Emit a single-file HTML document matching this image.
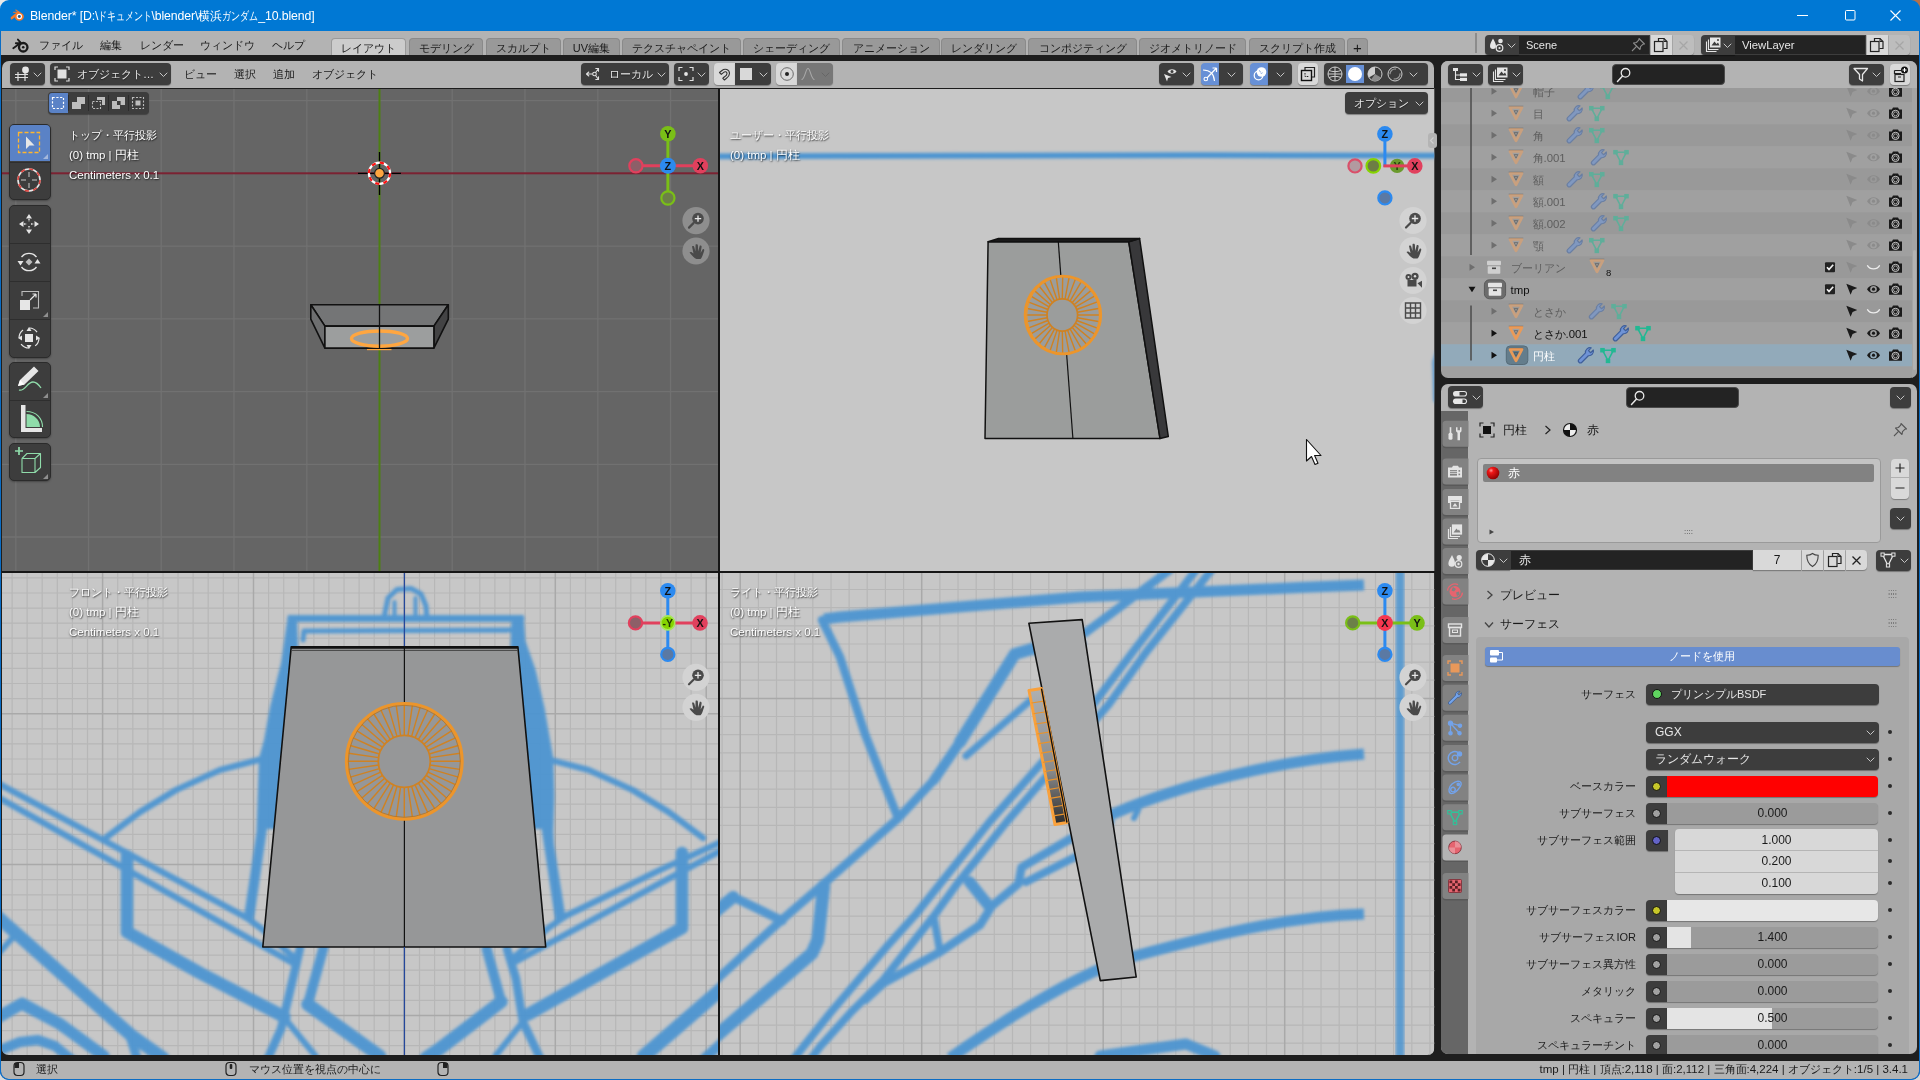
<!DOCTYPE html>
<html lang="ja"><head><meta charset="utf-8"><title>Blender</title>
<style>
*{box-sizing:border-box;margin:0;padding:0}
html,body{width:1920px;height:1080px;overflow:hidden;background:#1e1e1e;font-family:"Liberation Sans",sans-serif;font-size:12px;color:#1a1a1a}
.abs{position:absolute}
#titlebar{position:absolute;left:0;top:0;width:1920px;height:31px;background:#0078d4;color:#fff}
#titlebar .t{position:absolute;left:30px;top:8px;font-size:12.3px;white-space:nowrap;letter-spacing:-0.1px}
#menubar{position:absolute;left:1px;top:31px;width:1918px;height:24px;background:#b3b3b3}
.mi{position:absolute;top:8px;font-size:11px;color:#1a1a1a;white-space:nowrap;line-height:12px}
.tab{position:absolute;top:7px;height:17px;background:#999;border:1px solid #8a8a8a;border-bottom:none;border-radius:4px 4px 0 0;font-size:11px;line-height:19px;text-align:center;color:#1a1a1a;white-space:nowrap;overflow:hidden}
.tab.on{background:#ccc;border-color:#9a9a9a}
.dk{position:absolute;background:#3d3d3d;border-radius:4px;box-shadow:0 1px 1px rgba(0,0,0,.35);color:#e6e6e6;font-size:11.5px;white-space:nowrap}
.lt{position:absolute;background:#d9d9d9;border-radius:4px;box-shadow:0 1px 1px rgba(0,0,0,.3);color:#1a1a1a;font-size:11.5px;white-space:nowrap}
.tx{position:absolute;white-space:nowrap;line-height:12px;font-size:11px}
.la{font-size:11.5px}
.kn{display:inline-block;font-size:12px;transform:scaleX(.75);transform-origin:0 50%;white-space:nowrap;vertical-align:top}
svg{position:absolute;overflow:visible}
.chev{fill:none;stroke:#c6c6c6;stroke-width:1;stroke-linecap:round;stroke-linejoin:round}
#root{position:absolute;left:0;top:0;width:1920px;height:1080px;will-change:transform;transform:translateZ(0)}
</style></head><body><div id="root">
<div id="titlebar">
<svg style="left:10px;top:9px" width="15" height="13" viewBox="0 0 17 15"><path d="M1 9.2 L7.2 4.4 L4 4.4 C3.2 4.4 3.2 3.2 4 3.2 L8.6 3.2 L6.2 1.6 C5.6 1.1 6.3 0.3 6.9 0.7 L14.2 5.6 C17.5 8.2 15.6 13.6 10.6 13.6 C7.6 13.6 5.6 11.6 5.5 9.6 L2 12 C0.9 12.7 0 10 1 9.2Z" fill="#f5792a"/><circle cx="10.6" cy="8.6" r="3.1" fill="#fff"/><circle cx="10.6" cy="8.6" r="1.7" fill="#265787"/></svg>
<div class="t">Blender* [D:\<span class="kn" style="width:53px">ドキュメント</span>\blender\横浜<span class="kn" style="width:36px">ガンダム</span>_10.blend]</div>
<svg style="left:1797px;top:15px" width="12" height="2"><rect width="11" height="1" fill="#fff"/></svg>
<svg style="left:1845px;top:10px" width="11" height="11"><rect x="0.5" y="0.5" width="9.5" height="9.5" rx="1" fill="none" stroke="#fff" stroke-width="1"/></svg>
<svg style="left:1890px;top:10px" width="12" height="12"><path d="M0.5 0.5 L10.5 10.5 M10.5 0.5 L0.5 10.5" stroke="#fff" stroke-width="1.1" fill="none"/></svg>
</div>
<div class="abs" style="left:0;top:31px;width:1px;height:1049px;background:#0a6cc4"></div>
<div class="abs" style="left:1919px;top:31px;width:1px;height:1049px;background:#0a6cc4"></div>
<div class="abs" style="left:0;top:1079px;width:1920px;height:1px;background:#0a6cc4"></div>
<div id="menubar">
<svg style="left:11px;top:6.5px" width="18" height="16" viewBox="0 0 17 15"><path d="M1.2 9.6 L7.6 4.9 L3.6 4.9 M8.4 4.6 L5.6 1.4 " fill="none" stroke="#1a1a1a" stroke-width="1.7" stroke-linecap="round" stroke-linejoin="round"/><circle cx="10.6" cy="8.7" r="4" fill="none" stroke="#1a1a1a" stroke-width="2.2"/><circle cx="10.6" cy="8.7" r="1.2" fill="#1a1a1a"/></svg>
<div class="mi" style="left:38px">ファイル</div>
<div class="mi" style="left:99px">編集</div>
<div class="mi" style="left:139px">レンダー</div>
<div class="mi" style="left:199px">ウィンドウ</div>
<div class="mi" style="left:271px">ヘルプ</div>
<div class="tab on" style="left:330px;width:75px">レイアウト</div>
<div class="tab" style="left:408px;width:74px">モデリング</div>
<div class="tab" style="left:485px;width:75px">スカルプト</div>
<div class="tab" style="left:562px;width:57px">UV編集</div>
<div class="tab" style="left:621px;width:119px">テクスチャペイント</div>
<div class="tab" style="left:742px;width:97px">シェーディング</div>
<div class="tab" style="left:841px;width:98px">アニメーション</div>
<div class="tab" style="left:940px;width:85px">レンダリング</div>
<div class="tab" style="left:1027px;width:109px">コンポジティング</div>
<div class="tab" style="left:1138px;width:107px">ジオメトリノード</div>
<div class="tab" style="left:1248px;width:96px">スクリプト作成</div>
<div class="tab" style="left:1346px;width:21px;font-size:15px;line-height:17px">+</div>
<!-- scene / viewlayer -->
<div class="abs" style="left:1474px;top:2px;width:2px;height:20px;background:#8c8c8c"></div>
<div class="dk" style="left:1484px;top:4px;width:34px;height:20px;border-radius:4px 0 0 4px"></div>
<div class="abs" style="left:1517px;top:4px;width:132px;height:20px;background:#232323;border:1px solid #3d3d3d"></div>
<div class="tx" style="left:1525px;top:8px;color:#e6e6e6;font-size:11px">Scene</div>
<div class="lt" style="left:1650px;top:4px;width:21px;height:20px;border-radius:0"></div>
<div class="lt" style="left:1672px;top:4px;width:21px;height:20px;border-radius:0 4px 4px 0;background:#bdbdbd"></div>
<div class="dk" style="left:1700px;top:4px;width:34px;height:20px;border-radius:4px 0 0 4px"></div>
<div class="abs" style="left:1733px;top:4px;width:132px;height:20px;background:#232323;border:1px solid #3d3d3d"></div>
<div class="tx" style="left:1741px;top:8px;color:#e6e6e6;font-size:11.3px">ViewLayer</div>
<div class="lt" style="left:1866px;top:4px;width:21px;height:20px;border-radius:0"></div>
<div class="lt" style="left:1888px;top:4px;width:21px;height:20px;border-radius:0 4px 4px 0;background:#bdbdbd"></div>
<svg style="left:1488px;top:6px" width="17" height="16" viewBox="0 0 17 16"><path d="M4 1.500C5.500 4.500 7 6.500 7 9A3 3 0 0 1 1 9C1 6.500 2.500 4.500 4 1.500Z" fill="#e6e6e6"/><circle cx="11.500" cy="4" r="2.300" fill="#e6e6e6"/><circle cx="10.500" cy="11" r="3.300" fill="none" stroke="#e6e6e6" stroke-width="1.200"/><circle cx="10.500" cy="11" r="1.100" fill="#e6e6e6"/></svg>
<svg style="left:1506px;top:12px" width="9" height="6" viewBox="0 0 9 6"><path class="chev" d="M1 1L4.500 4.500L8 1"/></svg>
<svg style="left:1629px;top:6px" width="16" height="16" viewBox="0 0 16 16"><path d="M9 1.500L14.500 7L12.800 7.300L10.500 9.600L10 12.500L3.500 6L6.400 5.500L8.700 3.200Z" fill="none" stroke="#8a8a8a" stroke-width="1.100" stroke-linejoin="round"/><path d="M6.800 9.200L2 14" stroke="#8a8a8a" stroke-width="1.100"/></svg>
<svg style="left:1652px;top:6px" width="16" height="16" viewBox="0 0 16 16"><path d="M5.500 4V1.500H11L14 4.500V11.500H10.500" fill="none" stroke="#222" stroke-width="1.200"/><path d="M11 1.500V4.500H14" fill="none" stroke="#222" stroke-width="1"/><rect x="1.500" y="4.500" width="8.500" height="10" fill="none" stroke="#222" stroke-width="1.200"/></svg>
<svg style="left:1677px;top:9px" width="11" height="11"><path d="M1.500 1.500L9.500 9.500M9.500 1.500L1.500 9.500" stroke="#a6a6a6" stroke-width="1.200"/></svg>
<svg style="left:1704px;top:5px" width="17" height="17" viewBox="0 0 17 17"><rect x="5" y="1.500" width="10.500" height="10" fill="#e6e6e6"/><path d="M6.500 9.500L9.500 5.500L11.500 8L13 6.500L14.500 9.500Z" fill="#3d3d3d"/><circle cx="13" cy="4" r="1" fill="#3d3d3d"/><path d="M3.500 3.500V13.500H13.500M1.500 5.500V15.500H11.500" stroke="#e6e6e6" stroke-width="1.100" fill="none"/></svg>
<svg style="left:1722px;top:12px" width="9" height="6" viewBox="0 0 9 6"><path class="chev" d="M1 1L4.500 4.500L8 1"/></svg>
<svg style="left:1868px;top:6px" width="16" height="16" viewBox="0 0 16 16"><path d="M5.500 4V1.500H11L14 4.500V11.500H10.500" fill="none" stroke="#222" stroke-width="1.200"/><path d="M11 1.500V4.500H14" fill="none" stroke="#222" stroke-width="1"/><rect x="1.500" y="4.500" width="8.500" height="10" fill="none" stroke="#222" stroke-width="1.200"/></svg>
<svg style="left:1893px;top:9px" width="11" height="11"><path d="M1.500 1.500L9.500 9.500M9.500 1.500L1.500 9.500" stroke="#a6a6a6" stroke-width="1.200"/></svg>
</div>
<!-- status bar -->
<div class="abs" id="status" style="left:1px;top:1061px;width:1918px;height:18px;background:#b3b3b3;border-radius:0 0 7px 7px">
<svg style="left:12px;top:0px" width="12" height="16" viewBox="0 0 12 16"><rect x="1" y="1.500" width="10" height="13" rx="3.500" fill="none" stroke="#222" stroke-width="1.200"/><path d="M1.500 2H6V7H1.500Z" fill="#222"/></svg>
<svg style="left:224px;top:0px" width="12" height="16" viewBox="0 0 12 16"><rect x="1" y="1.500" width="10" height="13" rx="3.500" fill="none" stroke="#222" stroke-width="1.200"/><rect x="4.700" y="3" width="2.600" height="5" rx="1" fill="#222"/></svg>
<svg style="left:436px;top:0px" width="12" height="16" viewBox="0 0 12 16"><rect x="1" y="1.500" width="10" height="13" rx="3.500" fill="none" stroke="#222" stroke-width="1.200"/><path d="M6 2H10.500V7H6Z" fill="#222"/></svg>
<div class="tx" style="left:35px;top:2px">選択</div>
<div class="tx" style="left:248px;top:2px">マウス位置を視点の中心に</div>
<div class="tx" style="right:11px;top:2px"><span class="la">tmp | </span>円柱<span class="la"> | </span>頂点<span class="la">:2,118 | </span>面<span class="la">:2,112 | </span>三角面<span class="la">:4,224 | </span>オブジェクト<span class="la">:1/5 | 3.4.1</span></div>
</div>
<div class="abs" id="vp" style="left:2px;top:61px;width:1432.3px;height:60px;background:#b3b3b3;border-radius:7px 7px 0 0"></div>
<svg id="vpsvg" style="left:0;top:0" width="1920" height="1080" viewBox="0 0 1920 1080">
<defs>
<clipPath id="cTL"><rect x="2" y="88" width="716" height="483"/></clipPath>
<clipPath id="cTR"><rect x="720" y="88" width="714.300" height="483"/></clipPath>
<clipPath id="cBL"><path d="M2 573H718V1055H9Q2 1055 2 1048Z"/></clipPath>
<clipPath id="cBR"><path d="M720 573H1434.300V1048Q1434.300 1055 1427.300 1055H720Z"/></clipPath>
<filter id="bl" x="-5%" y="-5%" width="110%" height="110%"><feGaussianBlur stdDeviation="1.7"/></filter>
<filter id="bl2" x="-5%" y="-5%" width="110%" height="110%"><feGaussianBlur stdDeviation="1.6"/></filter>
<linearGradient id="wg" x1="0" y1="0" x2="0" y2="1"><stop offset="0" stop-color="#aeb0b1"/><stop offset="0.6" stop-color="#8a8b8c"/><stop offset="1" stop-color="#2c2c2c"/></linearGradient>
</defs>
<rect x="2" y="88" width="716" height="483" fill="#656565"/>
<rect x="720" y="88" width="714.300" height="483" fill="#c7c7c7"/>
<rect x="2" y="573" width="716" height="482" fill="#c7c7c7" clip-path="url(#cBL)"/>
<rect x="720" y="573" width="714.300" height="482" fill="#c7c7c7" clip-path="url(#cBR)"/>
<g clip-path="url(#cTL)"><path d="M-57.0 88V571M15.8 88V571M88.5 88V571M161.2 88V571M234.0 88V571M306.8 88V571M379.5 88V571M452.2 88V571M525.0 88V571M597.8 88V571M670.5 88V571M743.2 88V571M2 27.8H718M2 100.6H718M2 173.3H718M2 246.1H718M2 318.8H718M2 391.6H718M2 464.3H718M2 537.0H718M2 609.8H718" stroke="#717171" stroke-width="1.3" fill="none"/></g>
<g clip-path="url(#cTL)"><rect x="2" y="172.3" width="716" height="2" fill="#7b2232"/><rect x="378.5" y="88" width="2" height="483" fill="#4d7f12"/></g>
<g clip-path="url(#cBL)"><path d="M-3.0 573V1055M12.1 573V1055M27.1 573V1055M42.2 573V1055M57.3 573V1055M72.4 573V1055M87.5 573V1055M117.7 573V1055M132.8 573V1055M147.9 573V1055M163.0 573V1055M178.0 573V1055M193.1 573V1055M208.2 573V1055M223.3 573V1055M238.4 573V1055M268.6 573V1055M283.7 573V1055M298.8 573V1055M313.9 573V1055M328.9 573V1055M344.0 573V1055M359.1 573V1055M374.2 573V1055M389.3 573V1055M419.5 573V1055M434.6 573V1055M449.7 573V1055M464.8 573V1055M479.8 573V1055M494.9 573V1055M510.0 573V1055M525.1 573V1055M540.2 573V1055M570.4 573V1055M585.5 573V1055M600.6 573V1055M615.7 573V1055M630.8 573V1055M645.8 573V1055M660.9 573V1055M676.0 573V1055M691.1 573V1055M721.3 573V1055M2 577.9H718M2 593.0H718M2 608.1H718M2 623.2H718M2 638.2H718M2 653.3H718M2 668.4H718M2 683.5H718M2 698.6H718M2 728.8H718M2 743.9H718M2 759.0H718M2 774.1H718M2 789.2H718M2 804.2H718M2 819.3H718M2 834.4H718M2 849.5H718M2 879.7H718M2 894.8H718M2 909.9H718M2 925.0H718M2 940.1H718M2 955.1H718M2 970.2H718M2 985.3H718M2 1000.4H718M2 1030.6H718M2 1045.7H718M2 1060.8H718" stroke="#b7b7b7" stroke-width="1.2" fill="none"/><path d="M102.6 573V1055M253.5 573V1055M404.4 573V1055M555.3 573V1055M706.2 573V1055M2 562.8H718M2 713.7H718M2 864.6H718M2 1015.5H718" stroke="#a9a9a9" stroke-width="1.5" fill="none"/></g>
<g clip-path="url(#cBR)"><path d="M703.9 573V1055M722.1 573V1055M758.4 573V1055M776.5 573V1055M794.7 573V1055M812.8 573V1055M831.0 573V1055M849.1 573V1055M867.2 573V1055M885.4 573V1055M903.6 573V1055M939.9 573V1055M958.0 573V1055M976.2 573V1055M994.3 573V1055M1012.5 573V1055M1030.6 573V1055M1048.8 573V1055M1066.9 573V1055M1085.0 573V1055M1121.3 573V1055M1139.5 573V1055M1157.7 573V1055M1175.8 573V1055M1194.0 573V1055M1212.1 573V1055M1230.2 573V1055M1248.4 573V1055M1266.5 573V1055M1302.8 573V1055M1321.0 573V1055M1339.2 573V1055M1357.3 573V1055M1375.5 573V1055M1393.6 573V1055M1411.8 573V1055M1429.9 573V1055M1448.0 573V1055M720 571.4H1435M720 589.5H1435M720 607.6H1435M720 625.8H1435M720 644.0H1435M720 662.1H1435M720 680.2H1435M720 716.5H1435M720 734.7H1435M720 752.9H1435M720 771.0H1435M720 789.1H1435M720 807.3H1435M720 825.4H1435M720 843.6H1435M720 861.8H1435M720 898.0H1435M720 916.2H1435M720 934.4H1435M720 952.5H1435M720 970.6H1435M720 988.8H1435M720 1006.9H1435M720 1025.1H1435M720 1043.2H1435" stroke="#b7b7b7" stroke-width="1.2" fill="none"/><path d="M740.2 573V1055M921.7 573V1055M1103.2 573V1055M1284.7 573V1055M720 698.4H1435M720 879.9H1435M720 1061.4H1435" stroke="#a9a9a9" stroke-width="1.5" fill="none"/></g>
<g clip-path="url(#cTR)" filter="url(#bl)" fill="none" stroke="#4b94d1" stroke-linecap="round" stroke-linejoin="round">
<path d="M715.0 156.3 L1000.0 155.6 L1200.0 155.2 L1440.0 155.6" stroke-width="5.8" />
<path d="M1437.0 352.0 L1434.0 362.0 L1435.0 400.0 L1438.0 404.0" stroke-width="3" />
</g>
<g clip-path="url(#cBL)" filter="url(#bl)" fill="none" stroke="#4b94d1" stroke-linecap="round" stroke-linejoin="round" opacity="0.93">
<path d="M288 615L297 615L300 700L285 800L282 829L267 829L253.500 922L243.500 920L256.500 832L259 758L264 740L270 707L281 663Z" fill="#4b94d1" stroke="none"/>
<path d="M523.500 615L511.600 615L508.600 700L523.600 800L526.600 829L541.600 829L555.500 922L566 920L554 844L553.300 832L554.400 796L553.300 758L544.400 707L535.500 669.500L525.500 641Z" fill="#4b94d1" stroke="none"/>
<path d="M291.0 618.5 L521.0 618.5" stroke-width="7" />
<path d="M303.0 640.0 L304.0 631.0 L513.0 630.0 L514.0 640.0" stroke-width="5" />
<path d="M384.4 616.0 L388.0 598.0 L397.0 589.5 L411.0 588.5 L421.0 594.0 L426.0 606.0 L426.7 616.0" stroke-width="5" />
<path d="M394.5 616.0 L394.5 602.0" stroke-width="4" />
<path d="M415.5 616.0 L415.5 598.0" stroke-width="4" />
<path d="M264.0 758.5 L220.0 770.0 L176.0 790.0 L140.0 812.0 L105.5 838.0" stroke-width="6.3" />
<path d="M544.6 758.5 L588.6 770.0 L632.6 790.0 L668.6 812.0 L703.1 838.0" stroke-width="6.3" />
<path d="M-3.0 796.8 L293.3 963.3" stroke-width="6.3" />
<path d="M-3.0 782.8 L246.7 917.8 L262.0 929.0 L294.4 957.8" stroke-width="6.3" />
<path d="M723.0 849.5 L660.0 883.3 L514.4 962.2" stroke-width="6.3" />
<path d="M723.0 841.0 L660.0 870.0 L564.4 916.7 L547.0 929.0 L514.5 957.0" stroke-width="6.3" />
<path d="M294.4 957.8 L294.0 963.0" stroke-width="5" />
<path d="M514.5 957.0 L514.4 962.0" stroke-width="5" />
<path d="M127.0 856.0 L127.0 932.0 L200.0 973.0 L284.4 1016.9" stroke-width="12.5" />
<path d="M284.4 1018.0 L315.6 1056.0" stroke-width="6" />
<path d="M682.0 853.0 L682.0 928.0 L527.5 1014.8" stroke-width="12.5" />
<path d="M527.5 1016.0 L495.4 1056.0" stroke-width="6" />
<path d="M300.0 948.0 L292.0 982.5 L281.0 1029.0 L268.0 1058.0" stroke-width="8.5" />
<path d="M323.4 948.0 L307.8 1004.4" stroke-width="10" />
<path d="M307.8 1004.4 L379.7 1056.0" stroke-width="13" />
<path d="M507.0 949.0 L515.8 978.0 L523.0 1022.0 L540.0 1058.0" stroke-width="8.5" />
<path d="M486.7 949.0 L501.2 1001.7" stroke-width="10" />
<path d="M501.2 1001.7 L438.0 1050.0 L426.0 1058.0" stroke-width="13" />
<path d="M-5.0 914.5 L130.4 1034.7 L163.0 1058.0" stroke-width="13" />
<path d="M128.0 1030.0 L137.0 1058.0" stroke-width="9" />
<path d="M-3.0 955.0 L13.3 937.0" stroke-width="6" />
<path d="M-5.0 1019.0 L22.0 1003.6 L60.0 1024.0 L103.7 1056.0" stroke-width="12" />
<path d="M-5.0 1052.0 L20.0 1042.0 L38.0 1040.0 L55.0 1046.0 L72.0 1060.0" stroke-width="10" />
<path d="M725.0 986.0 L644.0 1056.0" stroke-width="14" />
<path d="M725.0 1040.0 L705.0 1058.0" stroke-width="10" />
</g>
<g clip-path="url(#cBR)" filter="url(#bl)" fill="none" stroke="#4b94d1" stroke-linecap="round" stroke-linejoin="round" opacity="0.93">
<path d="M824 619L840 617L1080 597L1300 587.5L1364 585" stroke-width="11" stroke-linecap="butt"/>
<path d="M1364 754 C1280 760 1180 785 1113 814 C1090 824 1085 828 1075 834" stroke-width="11" stroke-linecap="butt"/>
<path d="M1364 914 C1300 916 1235 929 1135 956 C1100 966 1040 995 950 1058" stroke-width="11" stroke-linecap="butt"/>
<path d="M822.0 620.0 L840.0 657.0 L865.0 734.0 L883.0 780.0 L898.0 818.0" stroke-width="8.5" />
<path d="M960.0 742.0 L934.0 780.0 L898.0 818.5 L823.7 883.7 L782.2 919.5 L715.0 981.0" stroke-width="8.5" />
<path d="M934.0 780.0 L960.0 742.0" stroke-width="10" />
<path d="M960.0 742.0 L1014.8 654.0 L1032.0 649.0 L1080.0 644.0" stroke-width="12" />
<path d="M966.0 756.0 L1031.0 700.0" stroke-width="7" />
<path d="M823.7 886.0 L817.8 940.0 L811.9 953.3 L715.0 1037.0" stroke-width="13" />
<path d="M715.0 912.0 L733.3 897.0" stroke-width="12" />
<path d="M733.3 897.0 L782.2 920.7" stroke-width="9" />
<path d="M1196.0 570.0 L1132.8 651.8 L1093.9 703.6 L989.6 821.9 L940.0 884.0 L916.7 913.3 L886.7 946.7 L858.3 980.0 L830.0 1013.3 L803.3 1046.7 L793.0 1060.0" stroke-width="7.8" />
<path d="M1211.5 570.0 L1146.4 651.8 L1109.4 703.6 L1006.7 821.9 L957.0 884.0 L933.3 916.7 L906.7 950.0 L883.3 980.0 L850.0 1013.3 L820.0 1046.7 L810.0 1060.0" stroke-width="7.8" />
<path d="M1169.6 570.0 L1085.0 633.0" stroke-width="8.5" />
<path d="M969.6 882.0 L988.9 906.0" stroke-width="11.5" />
<path d="M934.0 918.3 L940.0 952.0" stroke-width="7.5" />
<path d="M1110.0 822.0 L1070.0 839.0 L1021.5 867.4 L1018.5 883.7 L991.9 906.0 L980.0 925.0 L940.0 952.0 L883.3 983.3 L865.0 1000.0" stroke-width="8.5" />
<path d="M1112.0 845.0 L1075.0 857.0 L1026.0 882.0" stroke-width="8" />
<path d="M1118.0 812.0 L1128.0 806.0 L1138.0 810.0 L1134.0 818.0" stroke-width="6" />
<path d="M1100.0 1056.0 L1186.0 1044.0 L1215.0 1056.0" stroke-width="11" />
</g>
<g clip-path="url(#cBR)" opacity="0.85"><rect x="1395.600" y="560" width="8.800" height="510" fill="#4b94d1" filter="url(#bl2)"/></g>
<g clip-path="url(#cTL)" stroke="#111" stroke-width="1.6" stroke-linejoin="round">
<path d="M310.8 304.8H448.3L433.9 326.1H324.9Z" fill="#747576"/>
<path d="M310.8 304.8L324.9 326.1V348.1L310.8 319.1Z" fill="#6e6f70"/>
<path d="M448.3 304.8L433.9 326.1V348.1L448.3 319.1Z" fill="#434344"/>
<path d="M324.9 326.1H433.9V348.1H324.9Z" fill="#9c9e9e"/>
<ellipse cx="379.5" cy="338.6" rx="28" ry="7.6" fill="none" stroke="#ffa640" stroke-width="3.4"/>
<path d="M367 349.6H391.5" stroke="#ffa640" stroke-width="1.2"/>
<path d="M379.5 304.8V348.1" fill="none" stroke-width="1.3"/>
</g>
<g clip-path="url(#cTL)"><path d="M358 173.3H401M379.5 152V195" stroke="#000" stroke-width="1.3"/>
<circle cx="379.5" cy="173.3" r="10.6" fill="none" stroke="#fff" stroke-width="2.2"/><circle cx="379.5" cy="173.3" r="10.6" fill="none" stroke="#f11" stroke-width="2.2" stroke-dasharray="4.16 4.16"/>
<circle cx="379.5" cy="173.3" r="4.9" fill="#ffa640" stroke="#1d2023" stroke-width="1.2"/></g>
<g clip-path="url(#cTR)" stroke="#111" stroke-width="1.5" stroke-linejoin="round">
<path d="M988.1 241.7L1128.75 241.7L1160 438.5L985 438.5Z" fill="#9b9d9c"/>
<path d="M1128.75 241.7L1139.6 238.5L1168.3 436.5L1160 438.5Z" fill="#38383a"/>
<path d="M988.1 241.7L998.5 238.5L1139.6 238.5L1128.75 241.7Z" fill="#1a1a1a"/>
<path d="M1058.3 241.7L1072.9 438.5" fill="none" stroke-width="1.2"/>
</g><g clip-path="url(#cTR)">
<ellipse cx="1062.7" cy="315" rx="37.8" ry="39" fill="#9b9d9c"/>
<path d="M1062.3 298.9L1062.7 276.2M1065.0 299.1L1069.2 276.8M1067.5 299.9L1075.6 278.5M1070.0 301.1L1081.5 281.4M1072.1 302.7L1086.9 285.3M1074.0 304.7L1091.5 290.1M1075.6 306.9L1095.3 295.6M1076.7 309.5L1098.0 301.7M1077.4 312.2L1099.7 308.3M1077.6 315.0L1100.3 315.0M1077.4 317.8L1099.7 321.7M1076.7 320.5L1098.0 328.3M1075.6 323.1L1095.3 334.4M1074.0 325.3L1091.5 339.9M1072.1 327.3L1086.9 344.7M1070.0 328.9L1081.5 348.6M1067.5 330.1L1075.6 351.5M1065.0 330.9L1069.2 353.2M1062.3 331.1L1062.7 353.8M1059.6 330.9L1056.2 353.2M1057.1 330.1L1049.8 351.5M1054.6 328.9L1043.9 348.6M1052.5 327.3L1038.5 344.7M1050.6 325.3L1033.9 339.9M1049.0 323.1L1030.1 334.4M1047.9 320.5L1027.4 328.3M1047.2 317.8L1025.7 321.7M1047.0 315.0L1025.1 315.0M1047.2 312.2L1025.7 308.3M1047.9 309.5L1027.4 301.7M1049.0 306.9L1030.1 295.6M1050.6 304.7L1033.9 290.1M1052.5 302.7L1038.5 285.3M1054.6 301.1L1043.9 281.4M1057.1 299.9L1049.8 278.5M1059.6 299.1L1056.2 276.8" stroke="#cf8223" stroke-width="1.4" fill="none"/><ellipse cx="1062.3" cy="315.0" rx="15.3" ry="16.1" fill="none" stroke="#cf8223" stroke-width="1.7"/>
<ellipse cx="1062.7" cy="315" rx="37.6" ry="38.8" fill="none" stroke="#ec952b" stroke-width="2.8"/>
<ellipse cx="1064.2" cy="315" rx="37.4" ry="38.6" fill="none" stroke="#ee972c" stroke-width="1"/>
</g>
<g clip-path="url(#cBL)" stroke="#111" stroke-width="1.6" stroke-linejoin="round">
<path d="M291.2 646.8H517.9L545.7 947H262.8Z" fill="#969798"/>
<path d="M291 650.4H518" stroke="#444" stroke-width="1" fill="none"/>
<path d="M291.2 647.6H517.9" stroke="#111" stroke-width="2.2" fill="none"/>
<path d="M404.4 573V646" stroke="#24479a" stroke-width="1.3"/><path d="M404.4 947V1055" stroke="#24479a" stroke-width="1.3"/>
<path d="M404.4 646.8V947" fill="none" stroke-width="1.2"/>
</g><g clip-path="url(#cBL)">
<circle cx="404.3" cy="761.3" r="58" fill="#969798"/>
<path d="M404.3 735.3L404.3 703.3M408.0 735.6L412.6 703.9M411.6 736.4L420.6 705.6M415.1 737.6L428.4 708.5M418.4 739.4L435.7 712.5M421.3 741.7L442.3 717.5M423.9 744.3L448.1 723.3M426.2 747.2L453.1 729.9M428.0 750.5L457.1 737.2M429.2 754.0L460.0 745.0M430.0 757.6L461.7 753.0M430.3 761.3L462.3 761.3M430.0 765.0L461.7 769.6M429.2 768.6L460.0 777.6M428.0 772.1L457.1 785.4M426.2 775.4L453.1 792.7M423.9 778.3L448.1 799.3M421.3 780.9L442.3 805.1M418.4 783.2L435.7 810.1M415.1 785.0L428.4 814.1M411.6 786.2L420.6 817.0M408.0 787.0L412.6 818.7M404.3 787.3L404.3 819.3M400.6 787.0L396.0 818.7M397.0 786.2L388.0 817.0M393.5 785.0L380.2 814.1M390.2 783.2L372.9 810.1M387.3 780.9L366.3 805.1M384.7 778.3L360.5 799.3M382.4 775.4L355.5 792.7M380.6 772.1L351.5 785.4M379.4 768.6L348.6 777.6M378.6 765.0L346.9 769.6M378.3 761.3L346.3 761.3M378.6 757.6L346.9 753.0M379.4 754.0L348.6 745.0M380.6 750.5L351.5 737.2M382.4 747.2L355.5 729.9M384.7 744.3L360.5 723.3M387.3 741.7L366.3 717.5M390.2 739.4L372.9 712.5M393.5 737.6L380.2 708.5M397.0 736.4L388.0 705.6M400.6 735.6L396.0 703.9" stroke="#cf8223" stroke-width="1.45" fill="none"/><ellipse cx="404.3" cy="761.3" rx="26.0" ry="26.0" fill="none" stroke="#cf8223" stroke-width="1.75"/>
<circle cx="404.3" cy="761.3" r="57.8" fill="none" stroke="#ec952b" stroke-width="3.2"/><circle cx="404.3" cy="761.3" r="56" fill="none" stroke="#b87420" stroke-width=".8"/>
</g>
<g clip-path="url(#cBR)" stroke-linejoin="round">
<path d="M1028.9 623.3L1082.2 619.6L1136.2 977L1100.3 980.6Z" fill="#aaabac" stroke="#111" stroke-width="1.6"/>
<path d="M1029 690.5L1041.5 688.6L1067 822.5L1055 824.6Z" fill="url(#wg)" stroke="#f9a13c" stroke-width="3"/>
<path d="M1031.4 703.0L1043.9 701.1M1033.5 713.8L1045.9 711.8M1035.5 724.0L1047.9 722.1M1037.4 733.9L1049.8 732.0M1039.3 743.6L1051.6 741.6M1041.1 753.1L1053.4 751.1M1042.9 762.4L1055.2 760.4M1044.7 771.5L1056.9 769.5M1046.5 780.6L1058.6 778.6M1048.2 789.6L1060.3 787.5M1049.9 798.4L1062.0 796.4M1051.6 807.2L1063.7 805.2M1053.3 815.9L1065.4 813.9" stroke="#e8932c" stroke-width="1.1" fill="none"/>
<path d="M1041.5 688.6L1067 822.5" stroke="#111" stroke-width="1.4"/>
</g>
<rect x="718" y="88" width="2" height="967" fill="#161616"/><rect x="2" y="571" width="1432.300" height="2" fill="#161616"/><rect x="2" y="88" width="1432.300" height="1" fill="#1c1c1c"/>
</svg>
<div class="abs" id="vph" style="left:0;top:0;width:1920px;height:0">
<div class="dk" style="left:10px;top:63px;width:35px;height:22px"></div>
<svg style="left:14px;top:66px" width="18" height="16" viewBox="0 0 18 16"><path d="M1 8.5H14M1 11.5H14M4 6V15M11 6V15" stroke="#e0e0e0" stroke-width="1.2" fill="none"/><circle cx="11.5" cy="4" r="3.4" fill="#e6e6e6"/></svg>
<svg style="left:33px;top:72px" width="9" height="6" viewBox="0 0 9 6"><path class="chev" d="M1 1L4.5 4.5L8 1"/></svg>
<div class="dk" style="left:50px;top:63px;width:121px;height:22px"></div>
<svg style="left:54px;top:66px" width="16" height="16" viewBox="0 0 16 16"><path d="M1 4V1H4M12 1H15V4M15 12V15H12M4 15H1V12" stroke="#e0e0e0" stroke-width="1.2" fill="none"/><rect x="3.5" y="3.5" width="9" height="9" fill="#e0e0e0"/></svg>
<div class="tx" style="left:77px;top:68px;color:#e6e6e6;text-shadow:0 1px 1px rgba(0,0,0,.5)">オブジェクト…</div>
<svg style="left:159px;top:72px" width="9" height="6" viewBox="0 0 9 6"><path class="chev" d="M1 1L4.5 4.5L8 1"/></svg>
<div class="tx" style="left:184px;top:68px">ビュー</div>
<div class="tx" style="left:234px;top:68px">選択</div>
<div class="tx" style="left:273px;top:68px">追加</div>
<div class="tx" style="left:312px;top:68px">オブジェクト</div>
<div class="dk" style="left:581px;top:63px;width:88px;height:22px"></div>
<svg style="left:585px;top:66px" width="17" height="16" viewBox="0 0 17 16"><path d="M9.5 8L1.5 8M1.5 8L3.8 6M1.5 8L3.8 10M9.5 8L13.5 2.5M13.5 2.5H10.8M13.5 2.5V5.2M9.5 8L13.5 13.5M13.5 13.5H10.8M13.5 13.5V10.8" stroke="#e0e0e0" stroke-width="1.1" fill="none" stroke-linecap="round"/><circle cx="9.5" cy="8" r="1.8" fill="#3d3d3d" stroke="#e0e0e0" stroke-width="1.1"/></svg>
<div class="tx" style="left:609px;top:68px;color:#e6e6e6;text-shadow:0 1px 1px rgba(0,0,0,.5)">ローカル</div>
<svg style="left:657px;top:72px" width="9" height="6" viewBox="0 0 9 6"><path class="chev" d="M1 1L4.5 4.5L8 1"/></svg>
<div class="dk" style="left:674px;top:63px;width:35px;height:22px"></div>
<svg style="left:678px;top:66px" width="16" height="16" viewBox="0 0 16 16"><path d="M1 5V1.5H4.5M11.5 1.5H15V5M15 11V14.5H11.5M4.5 14.5H1V11" stroke="#e0e0e0" stroke-width="1.2" fill="none"/><circle cx="8" cy="8" r="1.9" fill="#e6e6e6"/></svg>
<svg style="left:697px;top:72px" width="9" height="6" viewBox="0 0 9 6"><path class="chev" d="M1 1L4.5 4.5L8 1"/></svg>
<div class="lt" style="left:714px;top:63px;width:21px;height:22px;border-radius:4px 0 0 4px"></div>
<svg style="left:717px;top:66px" width="16" height="16" viewBox="0 0 16 16"><path d="M2.5 6.5L5 4.5C8 2 12.5 3.5 12.5 7.5C12.5 11 9.5 12 7.5 14L5.8 12.3C7.5 10.5 10 10 10 7.5C10 5.8 8 5.2 6.7 6.3L4.3 8.3Z" fill="none" stroke="#333" stroke-width="1.1" stroke-linejoin="round"/></svg>
<div class="dk" style="left:735px;top:63px;width:36px;height:22px;border-radius:0 4px 4px 0"></div>
<div class="abs" style="left:740px;top:68px;width:12px;height:12px;background:#d9d9d9"></div>
<svg style="left:759px;top:72px" width="9" height="6" viewBox="0 0 9 6"><path class="chev" d="M1 1L4.5 4.5L8 1"/></svg>
<div class="lt" style="left:776px;top:63px;width:21px;height:22px;border-radius:4px 0 0 4px"></div>
<svg style="left:779px;top:66px" width="16" height="16" viewBox="0 0 16 16"><circle cx="8" cy="8" r="6.3" fill="none" stroke="#6a6a6a" stroke-width="1"/><circle cx="8" cy="8" r="2" fill="#222"/></svg>
<div class="abs" style="left:797px;top:63px;width:36px;height:22px;border-radius:0 4px 4px 0;background:#777;box-shadow:0 1px 1px rgba(0,0,0,.25)"></div>
<svg style="left:800px;top:66px" width="16" height="16" viewBox="0 0 16 16"><path d="M1.5 13.5C5 13.5 5.5 2.5 8 2.5C10.5 2.5 11 13.5 14.5 13.5" fill="none" stroke="#a8a8a8" stroke-width="1.1"/></svg>
<svg style="left:821px;top:72px" width="9" height="6" viewBox="0 0 9 6"><path class="chev" style="stroke:#666" d="M1 1L4.5 4.5L8 1"/></svg>
<div class="dk" style="left:1159px;top:63px;width:35px;height:22px"></div>
<svg style="left:1162px;top:65px" width="18" height="18" viewBox="0 0 18 18"><path d="M5.5 6.5C7.5 3.6 12.5 3.6 14.5 6.5C12.5 9.4 7.5 9.4 5.5 6.5Z" fill="#e6e6e6"/><circle cx="10" cy="6.5" r="1.5" fill="#3d3d3d"/><path d="M2 9L9.5 12L6 13L5 16.5Z" fill="#e6e6e6"/></svg>
<svg style="left:1182px;top:72px" width="9" height="6" viewBox="0 0 9 6"><path class="chev" d="M1 1L4.5 4.5L8 1"/></svg>
<div class="abs" style="left:1201px;top:63px;width:19px;height:22px;border-radius:4px 0 0 4px;background:#6790d6;box-shadow:0 1px 1px rgba(0,0,0,.3)"></div>
<svg style="left:1202px;top:66px" width="17" height="16" viewBox="0 0 17 16"><path d="M1 4C8 4 12 8 12.5 15" fill="none" stroke="#fff" stroke-width="1.2"/><path d="M4.5 12.5L14.5 2M14.5 2H10.5M14.5 2V6" fill="none" stroke="#fff" stroke-width="1.2"/><circle cx="3.8" cy="13" r="1.8" fill="#6790d6" stroke="#fff" stroke-width="1.1"/></svg>
<div class="dk" style="left:1219px;top:63px;width:24px;height:22px;border-radius:0 4px 4px 0"></div>
<svg style="left:1227px;top:72px" width="9" height="6" viewBox="0 0 9 6"><path class="chev" d="M1 1L4.5 4.5L8 1"/></svg>
<div class="abs" style="left:1250px;top:63px;width:19px;height:22px;border-radius:4px 0 0 4px;background:#6790d6;box-shadow:0 1px 1px rgba(0,0,0,.3)"></div>
<svg style="left:1251px;top:65px" width="18" height="18" viewBox="0 0 18 18"><circle cx="10.5" cy="7" r="4.8" fill="#fff"/><circle cx="7.5" cy="10.5" r="4.3" fill="none" stroke="#fff" stroke-width="1.2"/><path d="M8.5 5.5L10.2 8.5L12 7.5" fill="none" stroke="#6790d6" stroke-width="1" stroke-dasharray="1.5 1"/></svg>
<div class="dk" style="left:1268px;top:63px;width:24px;height:22px;border-radius:0 4px 4px 0"></div>
<svg style="left:1276px;top:72px" width="9" height="6" viewBox="0 0 9 6"><path class="chev" d="M1 1L4.5 4.5L8 1"/></svg>
<div class="lt" style="left:1298px;top:63px;width:20px;height:22px"></div>
<svg style="left:1300px;top:66px" width="16" height="16" viewBox="0 0 16 16"><path d="M5 4V1.5H14.5V11H12" fill="none" stroke="#222" stroke-width="1.2"/><rect x="1.5" y="4.5" width="10" height="10" fill="none" stroke="#111" stroke-width="1.4"/><path d="M5 7V10.5H8.5" fill="none" stroke="#222" stroke-width="1" stroke-dasharray="1.6 1"/></svg>
<div class="dk" style="left:1324px;top:63px;width:104px;height:22px"></div>
<div class="abs" style="left:1346px;top:65px;width:18px;height:18px;background:#6790d6"></div>
<svg style="left:1324px;top:63px" width="104" height="22" viewBox="0 0 104 22"><g fill="none" stroke="#cfcfcf" stroke-width="1"><circle cx="11" cy="11" r="7"/><path d="M4 11H18M11 4V18M5 7.5C8.5 9 13.5 9 17 7.5M5 14.5C8.5 13 13.5 13 17 14.5"/></g><circle cx="31" cy="11" r="7" fill="#fff"/><circle cx="51" cy="11" r="7" fill="none" stroke="#cfcfcf" stroke-width="1"/><path d="M51 4A7 7 0 0 0 44.9 14.5L51 11Z" fill="#cfcfcf"/><path d="M51 11L57 14.6A7 7 0 0 1 47 16.8Z" fill="#8a8a8a"/><circle cx="71" cy="11" r="7" fill="none" stroke="#cfcfcf" stroke-width="1"/><circle cx="71" cy="11" r="5" fill="none" stroke="#999" stroke-width="1.2" stroke-dasharray="9 6"/><path d="M65.5 5H22M42.5 3V19M62.5 3V19M82 3V19" stroke="#333" stroke-width="0"/></svg>
<svg style="left:1409px;top:72px" width="9" height="6" viewBox="0 0 9 6"><path class="chev" d="M1 1L4.5 4.5L8 1"/></svg>
<div class="dk" style="left:1345px;top:92px;width:83px;height:22px"></div>
<div class="tx" style="left:1354px;top:97px;color:#e6e6e6;text-shadow:0 1px 1px rgba(0,0,0,.5)">オプション</div>
<svg style="left:1415px;top:101px" width="9" height="6" viewBox="0 0 9 6"><path class="chev" d="M1 1L4.5 4.5L8 1"/></svg>
<div class="dk" style="left:48px;top:92px;width:101px;height:22px;background:#3d3d3d"></div>
<div class="abs" style="left:49px;top:93px;width:19px;height:20px;background:#5a82c6;border-radius:3px 0 0 3px"></div>
<svg style="left:48px;top:92px" width="101" height="22" viewBox="0 0 101 22"><rect x="4.5" y="5.5" width="11" height="11" fill="none" stroke="#fff" stroke-width="1.2" stroke-dasharray="2.2 1.6"/><path d="M20.5 3V19M40.5 3V19M60.5 3V19M80.5 3V19" stroke="#2c2c2c" stroke-width="1"/><path d="M29 5H37V12H33V17H24V10H29Z" fill="#bdbdbd"/><rect x="44.500" y="9.5" width="8" height="7" fill="none" stroke="#bdbdbd" stroke-width="1.1" stroke-dasharray="2 1.4"/><path d="M49 5H57V13H54V8H49Z" fill="#bdbdbd"/><path d="M64 9H69V5H77V13H72V17H64Z" fill="#bdbdbd"/><rect x="69" y="9" width="3.6" height="4" fill="#3d3d3d"/><rect x="84.500" y="5.500" width="11" height="11" fill="none" stroke="#bdbdbd" stroke-width="1.1" stroke-dasharray="2 1.5"/><rect x="87.500" y="8.500" width="5" height="5" fill="#bdbdbd"/></svg>
<div class="abs" style="left:9px;top:124px;width:42px;height:76px;background:#3d3d3d;border:1px solid #2b2b2b;border-radius:5px;box-shadow:0 1px 2px rgba(0,0,0,.3)"></div>
<div class="abs" style="left:10px;top:162px;width:40px;height:1px;background:#2e2e2e"></div>
<div class="abs" style="left:9px;top:205px;width:42px;height:153px;background:#3d3d3d;border:1px solid #2b2b2b;border-radius:5px;box-shadow:0 1px 2px rgba(0,0,0,.3)"></div>
<div class="abs" style="left:10px;top:243px;width:40px;height:1px;background:#2e2e2e"></div>
<div class="abs" style="left:10px;top:281px;width:40px;height:1px;background:#2e2e2e"></div>
<div class="abs" style="left:10px;top:319px;width:40px;height:1px;background:#2e2e2e"></div>
<div class="abs" style="left:9px;top:362px;width:42px;height:76px;background:#3d3d3d;border:1px solid #2b2b2b;border-radius:5px;box-shadow:0 1px 2px rgba(0,0,0,.3)"></div>
<div class="abs" style="left:10px;top:400px;width:40px;height:1px;background:#2e2e2e"></div>
<div class="abs" style="left:9px;top:443px;width:42px;height:38px;background:#3d3d3d;border:1px solid #2b2b2b;border-radius:5px;box-shadow:0 1px 2px rgba(0,0,0,.3)"></div>
<div class="abs" style="left:10px;top:125px;width:40px;height:36px;background:#5a82c6;border-radius:4px 4px 0 0"></div>
<svg style="left:9px;top:124px" width="42" height="360" viewBox="0 0 42 360">
<rect x="9.500" y="8.500" width="21" height="20" fill="none" stroke="#ffb62e" stroke-width="1.3" stroke-dasharray="4 2"/><path d="M17 12.500L17 25L20.500 21.500L25.500 21.500Z" fill="#e6e6e6"/><path d="M39 30V35H34Z" fill="#a4b8dc"/>
<circle cx="20" cy="56" r="11" fill="none" stroke="#e8e8e8" stroke-width="1.6"/><circle cx="20" cy="56" r="11" fill="none" stroke="#d9443f" stroke-width="1.6" stroke-dasharray="4.3 4.3"/><path d="M20 48V53M20 59V64M12 56H17M23 56H28" stroke="#9a9a9a" stroke-width="1.5"/>
<g fill="#e6e6e6" stroke="#e6e6e6"><path d="M20 90L23 94.500H17ZM20 110L23 105.500H17ZM10 100L14.500 97V103ZM30 100L25.500 97V103Z" stroke="none"/><path d="M20 95V98M20 102V105M15 100H18M22 100H25" stroke-width="1.4" stroke-dasharray="1.6 1.2"/></g>
<g fill="none" stroke="#e6e6e6" stroke-width="1.3"><path d="M12.500 133A9.500 9.500 0 0 1 27.500 133M27.500 143A9.500 9.500 0 0 1 12.500 143"/></g><path d="M20 134.500L23.500 138L20 141.500L16.500 138Z" fill="#bdbdbd"/><path d="M8.500 137H14.500L11.500 141.500ZM25.500 139.500H31.500L28.500 135Z" fill="#e6e6e6"/>
<rect x="11" y="176" width="10" height="10" fill="#e6e6e6"/><path d="M13 172V167.500H29.500V184H24" fill="none" stroke="#bdbdbd" stroke-width="1.1"/><path d="M21 176L27 170M27 170H23.500M27 170V173.500" stroke="#e6e6e6" stroke-width="1.2" fill="none"/><path d="M39 188V193H34Z" fill="#8f8f8f"/>
<circle cx="20" cy="214" r="10" fill="none" stroke="#e6e6e6" stroke-width="1.2" stroke-dasharray="9 6.700"/><rect x="16" y="210" width="8" height="8" fill="#e6e6e6"/><path d="M20 203L22.500 207H17.500ZM20 225L22.500 221H17.500ZM9 214L13 211.500V216.500ZM31 214L27 211.500V216.500Z" fill="#e6e6e6"/>
<path d="M9 262L11 256L25 242.500L29.500 247L15.500 260.500Z" fill="#e6e6e6"/><path d="M9 262L11 256L15.500 260.500Z" fill="#fff"/><path d="M10 266C16 268 18 258 24 258C28 258 30 261 32 264" fill="none" stroke="#8fdcaa" stroke-width="1.3"/><path d="M39 269V274H34Z" fill="#8f8f8f"/>
<path d="M12 281H16.500V304H33V308H12Z" fill="#e6e6e6"/><path d="M17.500 303V290C25 290 31 296 31 303Z" fill="#8fdcaa"/><path d="M17.500 287.500C27 287.500 33.500 294 33.500 303" fill="none" stroke="#8fdcaa" stroke-width="1.1"/>
<g fill="none" stroke="#8fdcaa" stroke-width="1.1" stroke-linejoin="round"><path d="M13 334.500H26V348.500H13ZM13 334.500L18 329.500H31.500L26 334.500M31.500 329.500V343.500L26 348.500"/><path d="M10 323V331M6 327H14" stroke-width="1.7"/></g><path d="M39 350V355H34Z" fill="#8f8f8f"/>
</svg>
<div class="tx" style="left:69px;top:129px;color:#fff;text-shadow:0 1px 2px rgba(0,0,0,.5),1px 1px 1px rgba(0,0,0,.35)">トップ・平行投影</div>
<div class="tx la" style="left:69px;top:149px;color:#fff;text-shadow:0 1px 2px rgba(0,0,0,.5),1px 1px 1px rgba(0,0,0,.35)">(0) tmp | 円柱</div>
<div class="tx la" style="left:69px;top:169px;color:#fff;text-shadow:0 1px 2px rgba(0,0,0,.5),1px 1px 1px rgba(0,0,0,.35)">Centimeters x 0.1</div>
<div class="tx" style="left:730px;top:129px;color:#fff;text-shadow:0 1px 2px rgba(0,0,0,.5),1px 1px 1px rgba(0,0,0,.35)">ユーザー・平行投影</div>
<div class="tx la" style="left:730px;top:149px;color:#fff;text-shadow:0 1px 2px rgba(0,0,0,.5),1px 1px 1px rgba(0,0,0,.35)">(0) tmp | 円柱</div>
<div class="tx" style="left:69px;top:586px;color:#fff;text-shadow:0 1px 2px rgba(0,0,0,.5),1px 1px 1px rgba(0,0,0,.35)">フロント・平行投影</div>
<div class="tx la" style="left:69px;top:606px;color:#fff;text-shadow:0 1px 2px rgba(0,0,0,.5),1px 1px 1px rgba(0,0,0,.35)">(0) tmp | 円柱</div>
<div class="tx la" style="left:69px;top:626px;color:#fff;text-shadow:0 1px 2px rgba(0,0,0,.5),1px 1px 1px rgba(0,0,0,.35)">Centimeters x 0.1</div>
<div class="tx" style="left:730px;top:586px;color:#fff;text-shadow:0 1px 2px rgba(0,0,0,.5),1px 1px 1px rgba(0,0,0,.35)">ライト・平行投影</div>
<div class="tx la" style="left:730px;top:606px;color:#fff;text-shadow:0 1px 2px rgba(0,0,0,.5),1px 1px 1px rgba(0,0,0,.35)">(0) tmp | 円柱</div>
<div class="tx la" style="left:730px;top:626px;color:#fff;text-shadow:0 1px 2px rgba(0,0,0,.5),1px 1px 1px rgba(0,0,0,.35)">Centimeters x 0.1</div>
</div>
<svg style="left:0;top:0" width="1920" height="1080" viewBox="0 0 1920 1080" font-family="Liberation Sans, sans-serif" font-size="10.8" font-weight="bold" text-anchor="middle">
<path d="M667.9 133.8V198.0" stroke="#7abf17" stroke-width="3"/>
<path d="M635.9 165.8H700.3" stroke="#e1405d" stroke-width="3"/>
<circle cx="667.9" cy="133.800" r="7.800" fill="#7abf17"/><text x="667.9" y="137.7" fill="#111">Y</text>
<circle cx="700.300" cy="165.8" r="7.800" fill="#e1405d"/><text x="700.3" y="169.7" fill="#111">X</text>
<circle cx="635.900" cy="165.8" r="6.600" fill="#8d5f68" stroke="#e1405d" stroke-width="2.200"/>
<circle cx="667.9" cy="198" r="6.600" fill="#6c8048" stroke="#7abf17" stroke-width="2.200"/>
<circle cx="667.9" cy="165.8" r="8" fill="#2c8af0"/><text x="667.9" y="169.7" fill="#111">Z</text>
<circle cx="696.0" cy="220.6" r="13.600" fill="#8e8e8e"/><circle cx="698.0" cy="218.6" r="5.800" fill="#4a4a4a"/><path d="M693.5 223.1L689.0 227.6" stroke="#4a4a4a" stroke-width="2.200" stroke-linecap="round"/><path d="M694.8 218.6H701.2M698.0 215.4V221.8" stroke="#e8e8e8" stroke-width="1.300"/>
<circle cx="696.0" cy="251.0" r="13.600" fill="#8e8e8e"/><path d="M696.5 259.0c-2.500 -1 -5 -4 -7 -6.500c1 -1.200 2.500 -.500 4 1l-1.500 -7c1.200 -.800 2 -.300 2.400 1l1 4l.2 -7c1.300 -.600 2.200 -.200 2.300 1l.3 6l1.600 -6c1.300 -.200 2 .400 1.800 1.600l-1 6l2.300 -4c1.200 0 1.600 .700 1.200 1.800c-1.300 3.500 -2 7 -3.600 8.100z" fill="#4a4a4a"/>
<circle cx="1397.100" cy="165.9" r="7.200" fill="#6a9a2c"/><text x="1397.1" y="169.8" fill="#2a3d10">Y</text>
<path d="M1384.9 166.9V133.900" stroke="#2c8af0" stroke-width="3"/>
<path d="M1383.4 165.9H1414.800" stroke="#e1405d" stroke-width="3"/>
<circle cx="1384.9" cy="133.900" r="7.800" fill="#2c8af0"/><text x="1384.9" y="137.8" fill="#111">Z</text>
<circle cx="1414.800" cy="165.9" r="7.800" fill="#e1405d"/><text x="1414.8" y="169.8" fill="#111">X</text>
<circle cx="1355" cy="165.9" r="6.600" fill="#b29aa0" stroke="#d9506a" stroke-width="2.200"/>
<circle cx="1373.300" cy="165.9" r="6.800" fill="#6d7d44" stroke="#86d400" stroke-width="2.200"/>
<circle cx="1384.9" cy="197.900" r="6.600" fill="#5b79a3" stroke="#2c8af0" stroke-width="2.200"/>
<circle cx="1413.0" cy="220.5" r="13.600" fill="#d3d3d3"/><circle cx="1415.0" cy="218.5" r="5.800" fill="#4a4a4a"/><path d="M1410.5 223.0L1406.0 227.5" stroke="#4a4a4a" stroke-width="2.200" stroke-linecap="round"/><path d="M1411.8 218.5H1418.2M1415.0 215.3V221.7" stroke="#e8e8e8" stroke-width="1.300"/>
<circle cx="1413.0" cy="250.5" r="13.600" fill="#d3d3d3"/><path d="M1413.5 258.5c-2.500 -1 -5 -4 -7 -6.500c1 -1.200 2.500 -.500 4 1l-1.500 -7c1.200 -.800 2 -.300 2.400 1l1 4l.2 -7c1.300 -.600 2.200 -.200 2.300 1l.3 6l1.600 -6c1.300 -.200 2 .400 1.800 1.600l-1 6l2.300 -4c1.200 0 1.600 .700 1.200 1.800c-1.300 3.500 -2 7 -3.600 8.100z" fill="#4a4a4a"/>
<circle cx="1413.0" cy="280.5" r="13.600" fill="#d3d3d3"/><circle cx="1408.5" cy="277.0" r="3" fill="#4a4a4a"/><circle cx="1415.0" cy="276.3" r="3.600" fill="#4a4a4a"/><rect x="1407.5" y="280.0" width="9" height="6.500" fill="#4a4a4a"/><path d="M1417.5 283.2l4.500 -2.500v7z" fill="#4a4a4a"/><circle cx="1408.5" cy="277.0" r="1" fill="#ddd"/><circle cx="1415.0" cy="276.3" r="1.200" fill="#ddd"/>
<circle cx="1413.0" cy="310.5" r="13.600" fill="#d3d3d3"/><path d="M1405.5 303.0h15v15h-15zM1410.5 303.0v15M1415.5 303.0v15M1405.5 308.0h15M1405.5 313.0h15" fill="none" stroke="#4a4a4a" stroke-width="1.400"/>
<rect x="1428" y="133" width="9" height="15" rx="3" fill="#b4b4b4"/><path d="M1433.500 137.500L1430.500 140.500L1433.500 143.500" stroke="#d0d0d0" stroke-width="1.200" fill="none"/>
<path d="M667.8 590.700V654.400" stroke="#2c8af0" stroke-width="3"/>
<path d="M635.500 622.9H700" stroke="#e1405d" stroke-width="3"/>
<circle cx="667.8" cy="590.700" r="7.800" fill="#2c8af0"/><text x="667.8" y="594.6" fill="#111">Z</text>
<circle cx="700" cy="622.9" r="7.800" fill="#e1405d"/><text x="700.0" y="626.8" fill="#111">X</text>
<circle cx="635.500" cy="622.9" r="6.600" fill="#8d5f68" stroke="#e1405d" stroke-width="2.200"/>
<circle cx="667.8" cy="654.400" r="6.600" fill="#5b79a3" stroke="#2c8af0" stroke-width="2.200"/>
<circle cx="667.8" cy="622.9" r="7" fill="#86d400" stroke="#a6e85a" stroke-width="1.600"/><text x="667.8" y="626.7" fill="#1d3300" font-size="10.500">-Y</text>
<circle cx="696.0" cy="677.3" r="13.600" fill="#d3d3d3"/><circle cx="698.0" cy="675.3" r="5.800" fill="#4a4a4a"/><path d="M693.5 679.8L689.0 684.3" stroke="#4a4a4a" stroke-width="2.200" stroke-linecap="round"/><path d="M694.8 675.3H701.2M698.0 672.1V678.5" stroke="#e8e8e8" stroke-width="1.300"/>
<circle cx="696.0" cy="707.3" r="13.600" fill="#d3d3d3"/><path d="M696.5 715.3c-2.500 -1 -5 -4 -7 -6.500c1 -1.200 2.500 -.500 4 1l-1.500 -7c1.200 -.800 2 -.300 2.400 1l1 4l.2 -7c1.300 -.600 2.200 -.200 2.300 1l.3 6l1.600 -6c1.300 -.200 2 .400 1.800 1.600l-1 6l2.300 -4c1.200 0 1.600 .700 1.200 1.800c-1.300 3.500 -2 7 -3.600 8.100z" fill="#4a4a4a"/>
<path d="M1384.9 590.700V654.400" stroke="#2c8af0" stroke-width="3"/>
<path d="M1352.700 622.9H1417" stroke="#7abf17" stroke-width="3"/>
<circle cx="1384.9" cy="590.700" r="7.800" fill="#2c8af0"/><text x="1384.9" y="594.6" fill="#111">Z</text>
<circle cx="1417" cy="622.9" r="7.800" fill="#7abf17"/><text x="1417.0" y="626.8" fill="#111">Y</text>
<circle cx="1352.700" cy="622.9" r="6.600" fill="#6c8048" stroke="#7abf17" stroke-width="2.200"/>
<circle cx="1384.9" cy="654.400" r="6.600" fill="#5b79a3" stroke="#2c8af0" stroke-width="2.200"/>
<circle cx="1384.9" cy="622.9" r="8" fill="#f5374f"/><text x="1384.9" y="626.8" fill="#111">X</text>
<circle cx="1413.0" cy="677.3" r="13.600" fill="#d3d3d3"/><circle cx="1415.0" cy="675.3" r="5.800" fill="#4a4a4a"/><path d="M1410.5 679.8L1406.0 684.3" stroke="#4a4a4a" stroke-width="2.200" stroke-linecap="round"/><path d="M1411.8 675.3H1418.2M1415.0 672.1V678.5" stroke="#e8e8e8" stroke-width="1.300"/>
<circle cx="1413.0" cy="707.3" r="13.600" fill="#d3d3d3"/><path d="M1413.5 715.3c-2.500 -1 -5 -4 -7 -6.500c1 -1.200 2.500 -.500 4 1l-1.500 -7c1.200 -.800 2 -.300 2.400 1l1 4l.2 -7c1.300 -.600 2.200 -.200 2.300 1l.3 6l1.600 -6c1.300 -.200 2 .400 1.800 1.600l-1 6l2.300 -4c1.200 0 1.600 .700 1.200 1.800c-1.300 3.500 -2 7 -3.600 8.100z" fill="#4a4a4a"/>
<path d="M1306.500 439.500V461L1311.500 456.500L1315 464.500L1318 463.200L1314.600 455.500H1321Z" fill="#fff" stroke="#111" stroke-width="1.100" stroke-linejoin="round"/>
</svg>
<div class="abs" id="ol" style="left:1441px;top:61px;width:476px;height:317px;background:#a0a0a0;border-radius:7px;overflow:hidden">
<svg style="left:0;top:0" width="476" height="317" viewBox="1441 61 476 317" font-family="Liberation Sans, sans-serif" font-size="11.4">
<defs>
<g id="ob"><path d="M-6 -5.500H6L0 6Z" fill="none" stroke-width="2.700" stroke-linejoin="round"/><path d="M-1.800 -2.300H1.800L0 1.200Z" fill="none" stroke="#3a3a3a" stroke-opacity=".55" stroke-width=".800"/><path d="M-7.300 -6.900H7.300" stroke="#3a3a3a" stroke-opacity=".35" stroke-width=".700"/></g>
<g id="wr"><path d="M-6.500 3.800L-0.500 -2.200A4.300 4.300 0 0 1 4.800 -6.800L2.300 -4.300L4.300 -2.300L6.800 -4.800A4.300 4.300 0 0 1 2.200 0.500L-3.800 6.500A1.900 1.900 0 0 1 -6.500 3.800Z" stroke-width="1.100" stroke-linejoin="round"/></g>
<g id="me"><path d="M-5.500 -5H5.500L0 5.500Z" fill="none" stroke-width="1.500"/><rect x="-7.200" y="-6.700" width="3.400" height="3.400" stroke-width="1.100"/><rect x="3.800" y="-6.700" width="3.400" height="3.400" stroke-width="1.100"/><rect x="-1.700" y="4" width="3.400" height="3.400" stroke-width="1.100"/></g>
<g id="co"><rect x="-7" y="-6.500" width="14" height="4.500" rx="1"/><rect x="-6.300" y="-1" width="12.600" height="7.500" rx=".8"/><rect x="-2" y="0.300" width="4" height="1.600" fill="#444"/></g>
<g id="ar"><path d="M-5.500 -5.500L5.500 -1.200L0.800 0.800L-1.200 5.500Z"/></g>
<g id="ey"><path d="M-6.500 0C-3.500 -5.300 3.500 -5.300 6.500 0C3.500 5.300 -3.500 5.300 -6.500 0Z"/><circle r="3.300" fill="#a0a0a0" class="eh"/><circle r="1.500"/></g>
<g id="ec"><path d="M-6 -1.500C-3.500 2.800 3.500 2.800 6 -1.500" fill="none" stroke="#ececec" stroke-width="1.300" stroke-linecap="round"/></g>
<g id="ca"><path d="M-6.500 -3.800H-3.600L-2.500 -5.600H2.500L3.600 -3.800H6.500V5.500H-6.500Z"/><circle cy="0.700" r="3.600" fill="none" stroke="#cfcfcf" stroke-width="1"/><circle cy="0.700" r="2" fill="none" stroke="#cfcfcf" stroke-width=".700"/></g>
<g id="cb"><rect x="-5" y="-5" width="10" height="10" rx="1" fill="#222"/><path d="M-3 0L-1 2.300L3.200 -2.500" fill="none" stroke="#f0f0f0" stroke-width="1.700"/></g>
</defs>
<rect x="1441" y="80.25" width="471" height="22" fill="#999999"/>
<path d="M1491.5 87.8v7l5.500 -3.500z" fill="#6e6e6e"/>
<use href="#ob" x="1516" y="91.0" stroke="#c9a07e"/>
<text x="1532.500" y="95.5" fill="#5e5e5e">帽子</text>
<use href="#wr" transform="translate(1585.8 91.2) scale(1.08)" fill="#8098c0" stroke="#6a7fa3"/>
<use href="#me" x="1607.8" y="91.2" fill="#5fae9a" stroke="#5fae9a"/>
<use href="#ar" x="1851.800" y="91.2" fill="#8a8a8a"/>
<g fill="#8b8b8b"><path d="M1867.0 91.2c3 -5.300 10 -5.300 13 0c-3 5.300 -10 5.300 -13 0z"/><circle cx="1873.500" cy="91.2" r="3.300" fill="#999999"/><circle cx="1873.500" cy="91.2" r="1.600"/></g>
<use href="#ca" x="1895.500" y="91.2" fill="#1a1a1a"/>
<rect x="1441" y="102.25" width="471" height="22" fill="#a0a0a0"/>
<path d="M1491.5 109.8v7l5.500 -3.500z" fill="#6e6e6e"/>
<use href="#ob" x="1516" y="113.0" stroke="#c9a07e"/>
<text x="1532.500" y="117.5" fill="#5e5e5e">目</text>
<use href="#wr" transform="translate(1574.8 113.2) scale(1.08)" fill="#8098c0" stroke="#6a7fa3"/>
<use href="#me" x="1596.8" y="113.2" fill="#5fae9a" stroke="#5fae9a"/>
<use href="#ar" x="1851.800" y="113.2" fill="#8a8a8a"/>
<g fill="#8b8b8b"><path d="M1867.0 113.2c3 -5.300 10 -5.300 13 0c-3 5.300 -10 5.300 -13 0z"/><circle cx="1873.500" cy="113.2" r="3.300" fill="#a0a0a0"/><circle cx="1873.500" cy="113.2" r="1.600"/></g>
<use href="#ca" x="1895.500" y="113.2" fill="#1a1a1a"/>
<rect x="1441" y="124.25" width="471" height="22" fill="#999999"/>
<path d="M1491.5 131.8v7l5.500 -3.500z" fill="#6e6e6e"/>
<use href="#ob" x="1516" y="134.9" stroke="#c9a07e"/>
<text x="1532.500" y="139.6" fill="#5e5e5e">角</text>
<use href="#wr" transform="translate(1574.8 135.2) scale(1.08)" fill="#8098c0" stroke="#6a7fa3"/>
<use href="#me" x="1596.8" y="135.2" fill="#5fae9a" stroke="#5fae9a"/>
<use href="#ar" x="1851.800" y="135.2" fill="#8a8a8a"/>
<g fill="#8b8b8b"><path d="M1867.0 135.2c3 -5.300 10 -5.300 13 0c-3 5.300 -10 5.300 -13 0z"/><circle cx="1873.500" cy="135.2" r="3.300" fill="#999999"/><circle cx="1873.500" cy="135.2" r="1.600"/></g>
<use href="#ca" x="1895.500" y="135.2" fill="#1a1a1a"/>
<rect x="1441" y="146.25" width="471" height="22" fill="#a0a0a0"/>
<path d="M1491.5 153.8v7l5.500 -3.500z" fill="#6e6e6e"/>
<use href="#ob" x="1516" y="156.9" stroke="#c9a07e"/>
<text x="1532.500" y="161.6" fill="#5e5e5e">角.001</text>
<use href="#wr" transform="translate(1599.0 157.2) scale(1.08)" fill="#8098c0" stroke="#6a7fa3"/>
<use href="#me" x="1621.0" y="157.2" fill="#5fae9a" stroke="#5fae9a"/>
<use href="#ar" x="1851.800" y="157.2" fill="#8a8a8a"/>
<g fill="#8b8b8b"><path d="M1867.0 157.2c3 -5.300 10 -5.300 13 0c-3 5.300 -10 5.300 -13 0z"/><circle cx="1873.500" cy="157.2" r="3.300" fill="#a0a0a0"/><circle cx="1873.500" cy="157.2" r="1.600"/></g>
<use href="#ca" x="1895.500" y="157.2" fill="#1a1a1a"/>
<rect x="1441" y="168.25" width="471" height="22" fill="#999999"/>
<path d="M1491.5 175.8v7l5.500 -3.500z" fill="#6e6e6e"/>
<use href="#ob" x="1516" y="178.9" stroke="#c9a07e"/>
<text x="1532.500" y="183.6" fill="#5e5e5e">額</text>
<use href="#wr" transform="translate(1574.8 179.2) scale(1.08)" fill="#8098c0" stroke="#6a7fa3"/>
<use href="#me" x="1596.8" y="179.2" fill="#5fae9a" stroke="#5fae9a"/>
<use href="#ar" x="1851.800" y="179.2" fill="#8a8a8a"/>
<g fill="#8b8b8b"><path d="M1867.0 179.2c3 -5.300 10 -5.300 13 0c-3 5.300 -10 5.300 -13 0z"/><circle cx="1873.500" cy="179.2" r="3.300" fill="#999999"/><circle cx="1873.500" cy="179.2" r="1.600"/></g>
<use href="#ca" x="1895.500" y="179.2" fill="#1a1a1a"/>
<rect x="1441" y="190.25" width="471" height="22" fill="#a0a0a0"/>
<path d="M1491.5 197.8v7l5.500 -3.500z" fill="#6e6e6e"/>
<use href="#ob" x="1516" y="200.9" stroke="#c9a07e"/>
<text x="1532.500" y="205.6" fill="#5e5e5e">額.001</text>
<use href="#wr" transform="translate(1599.0 201.2) scale(1.08)" fill="#8098c0" stroke="#6a7fa3"/>
<use href="#me" x="1621.0" y="201.2" fill="#5fae9a" stroke="#5fae9a"/>
<use href="#ar" x="1851.800" y="201.2" fill="#8a8a8a"/>
<g fill="#8b8b8b"><path d="M1867.0 201.2c3 -5.300 10 -5.300 13 0c-3 5.300 -10 5.300 -13 0z"/><circle cx="1873.500" cy="201.2" r="3.300" fill="#a0a0a0"/><circle cx="1873.500" cy="201.2" r="1.600"/></g>
<use href="#ca" x="1895.500" y="201.2" fill="#1a1a1a"/>
<rect x="1441" y="212.25" width="471" height="22" fill="#999999"/>
<path d="M1491.5 219.8v7l5.500 -3.500z" fill="#6e6e6e"/>
<use href="#ob" x="1516" y="222.9" stroke="#c9a07e"/>
<text x="1532.500" y="227.6" fill="#5e5e5e">額.002</text>
<use href="#wr" transform="translate(1599.0 223.2) scale(1.08)" fill="#8098c0" stroke="#6a7fa3"/>
<use href="#me" x="1621.0" y="223.2" fill="#5fae9a" stroke="#5fae9a"/>
<use href="#ar" x="1851.800" y="223.2" fill="#8a8a8a"/>
<g fill="#8b8b8b"><path d="M1867.0 223.2c3 -5.300 10 -5.300 13 0c-3 5.300 -10 5.300 -13 0z"/><circle cx="1873.500" cy="223.2" r="3.300" fill="#999999"/><circle cx="1873.500" cy="223.2" r="1.600"/></g>
<use href="#ca" x="1895.500" y="223.2" fill="#1a1a1a"/>
<rect x="1441" y="234.25" width="471" height="22" fill="#a0a0a0"/>
<path d="M1491.5 241.8v7l5.500 -3.500z" fill="#6e6e6e"/>
<use href="#ob" x="1516" y="244.9" stroke="#c9a07e"/>
<text x="1532.500" y="249.6" fill="#5e5e5e">顎</text>
<use href="#wr" transform="translate(1574.8 245.2) scale(1.08)" fill="#8098c0" stroke="#6a7fa3"/>
<use href="#me" x="1596.8" y="245.2" fill="#5fae9a" stroke="#5fae9a"/>
<use href="#ar" x="1851.800" y="245.2" fill="#8a8a8a"/>
<g fill="#8b8b8b"><path d="M1867.0 245.2c3 -5.300 10 -5.300 13 0c-3 5.300 -10 5.300 -13 0z"/><circle cx="1873.500" cy="245.2" r="3.300" fill="#a0a0a0"/><circle cx="1873.500" cy="245.2" r="1.600"/></g>
<use href="#ca" x="1895.500" y="245.2" fill="#1a1a1a"/>
<rect x="1441" y="256.25" width="471" height="22" fill="#999999"/>
<path d="M1469.5 263.8v7l5.500 -3.500z" fill="#6e6e6e"/>
<use href="#co" x="1494" y="267.2" fill="#cfcfcf"/>
<text x="1510.500" y="271.6" fill="#5e5e5e">ブーリアン</text>
<use href="#ob" x="1597" y="265.9" stroke="#c9a07e"/>
<text x="1606" y="275.6" fill="#111" font-size="9.500">8</text>
<use href="#cb" x="1830" y="267.2"/>
<use href="#ar" x="1851.800" y="267.2" fill="#8a8a8a"/>
<use href="#ec" x="1873.500" y="267.2"/>
<use href="#ca" x="1895.500" y="267.2" fill="#1a1a1a"/>
<rect x="1441" y="278.25" width="471" height="22" fill="#a0a0a0"/>
<path d="M1468.5 286.8h7l-3.500 5.500z" fill="#111"/>
<rect x="1484.400" y="279.8" width="21.200" height="19" rx="5" fill="#6c6c6c" stroke="#5a5a5a" stroke-width="1"/>
<use href="#co" x="1495" y="289.2" fill="#e4e4e4"/>
<text x="1510.500" y="293.6" fill="#111">tmp</text>
<use href="#cb" x="1830" y="289.2"/>
<use href="#ar" x="1851.800" y="289.2" fill="#1a1a1a"/>
<g fill="#1a1a1a"><path d="M1867.0 289.2c3 -5.300 10 -5.300 13 0c-3 5.300 -10 5.300 -13 0z"/><circle cx="1873.500" cy="289.2" r="3.300" fill="#a0a0a0"/><circle cx="1873.500" cy="289.2" r="1.600"/></g>
<use href="#ca" x="1895.500" y="289.2" fill="#1a1a1a"/>
<rect x="1441" y="300.25" width="471" height="22" fill="#999999"/>
<path d="M1491.5 307.8v7l5.500 -3.500z" fill="#6e6e6e"/>
<use href="#ob" x="1516" y="310.9" stroke="#c9a07e"/>
<text x="1532.500" y="315.6" fill="#5e5e5e">とさか</text>
<use href="#wr" transform="translate(1597.0 311.2) scale(1.08)" fill="#8098c0" stroke="#6a7fa3"/>
<use href="#me" x="1619.0" y="311.2" fill="#5fae9a" stroke="#5fae9a"/>
<use href="#ar" x="1851.800" y="311.2" fill="#1a1a1a"/>
<use href="#ec" x="1873.500" y="311.2"/>
<use href="#ca" x="1895.500" y="311.2" fill="#1a1a1a"/>
<rect x="1441" y="322.25" width="471" height="22" fill="#a0a0a0"/>
<path d="M1491.5 329.8v7l5.500 -3.500z" fill="#111"/>
<use href="#ob" x="1516" y="332.9" stroke="#ea9a58"/>
<text x="1532.500" y="337.6" fill="#111">とさか.001</text>
<use href="#wr" transform="translate(1621.0 333.2) scale(1.08)" fill="#6f93d6" stroke="#3f5f9a"/>
<use href="#me" x="1643.0" y="333.2" fill="#22b893" stroke="#22b893"/>
<use href="#ar" x="1851.800" y="333.2" fill="#1a1a1a"/>
<g fill="#1a1a1a"><path d="M1867.0 333.2c3 -5.300 10 -5.300 13 0c-3 5.300 -10 5.300 -13 0z"/><circle cx="1873.500" cy="333.2" r="3.300" fill="#a0a0a0"/><circle cx="1873.500" cy="333.2" r="1.600"/></g>
<use href="#ca" x="1895.500" y="333.2" fill="#1a1a1a"/>
<rect x="1441" y="344.25" width="471" height="22" fill="#92aaba"/>
<path d="M1491.5 351.8v7l5.500 -3.500z" fill="#111"/>
<rect x="1506.300" y="345.9" width="21.500" height="18.600" rx="4" fill="#647d8c" stroke="#566b78" stroke-width="1"/>
<use href="#ob" x="1516" y="354.9" stroke="#ea9a58"/>
<text x="1532.500" y="359.6" fill="#fff">円柱</text>
<use href="#wr" transform="translate(1586.0 355.2) scale(1.08)" fill="#6f93d6" stroke="#3f5f9a"/>
<use href="#me" x="1608.0" y="355.2" fill="#22b893" stroke="#22b893"/>
<use href="#ar" x="1851.800" y="355.2" fill="#1a1a1a"/>
<g fill="#1a1a1a"><path d="M1867.0 355.2c3 -5.300 10 -5.300 13 0c-3 5.300 -10 5.300 -13 0z"/><circle cx="1873.500" cy="355.2" r="3.300" fill="#92aaba"/><circle cx="1873.500" cy="355.2" r="1.600"/></g>
<use href="#ca" x="1895.500" y="355.2" fill="#1a1a1a"/>
<path d="M1471 80V255" stroke="#505050" stroke-width="1.600"/><path d="M1471 305.400V360.400" stroke="#505050" stroke-width="1.600"/>
<rect x="1912" y="88" width="5" height="290" fill="#a4a4a4"/><rect x="1913" y="250" width="3" height="120" rx="1.500" fill="#b2b2b2"/>
</svg>
<div class="abs" style="left:0;top:0;width:476px;height:27px;background:#b3b3b3"></div>
<div class="dk" style="left:7px;top:3px;width:35px;height:21px"></div>
<svg style="left:11px;top:6px" width="17" height="15" viewBox="0 0 17 15"><rect x="1" y="1" width="5" height="3" fill="#e6e6e6"/><path d="M3.500 4V12.500H8M3.500 8H8" stroke="#e6e6e6" stroke-width="1.100" fill="none"/><rect x="8" y="6.300" width="7" height="3.200" fill="#e6e6e6"/><rect x="8" y="10.800" width="7" height="3.200" fill="#e6e6e6"/></svg>
<svg style="left:31px;top:11px" width="9" height="6" viewBox="0 0 9 6"><path class="chev" d="M1 1L4.500 4.500L8 1"/></svg>
<div class="dk" style="left:47px;top:3px;width:35px;height:21px"></div>
<svg style="left:51px;top:5px" width="17" height="17" viewBox="0 0 17 17"><rect x="5" y="1.500" width="10.500" height="10" fill="#e6e6e6"/><path d="M6.500 9.500L9.500 5.500L11.500 8L13 6.500L14.500 9.500Z" fill="#3d3d3d"/><circle cx="13" cy="4" r="1" fill="#3d3d3d"/><path d="M3.500 3.500V13.500H13.500M1.500 5.500V15.500H11.500" stroke="#e6e6e6" stroke-width="1.100" fill="none"/></svg>
<svg style="left:71px;top:11px" width="9" height="6" viewBox="0 0 9 6"><path class="chev" d="M1 1L4.500 4.500L8 1"/></svg>
<div class="abs" style="left:171px;top:3px;width:113px;height:21px;background:#232323;border:1.500px solid #4a4a4a;border-radius:4px"></div>
<svg style="left:175px;top:6px" width="16" height="16" viewBox="0 0 16 16"><circle cx="9.500" cy="5.800" r="4.300" fill="none" stroke="#e6e6e6" stroke-width="1.300"/><path d="M6.500 9L1.500 14.500" stroke="#e6e6e6" stroke-width="1.500" stroke-linecap="round"/></svg>
<div class="dk" style="left:408px;top:3px;width:35px;height:21px"></div>
<svg style="left:412px;top:6px" width="16" height="16" viewBox="0 0 16 16"><path d="M1 1.500H14.500L9.500 7.500V14L6.500 12V7.500Z" fill="none" stroke="#e6e6e6" stroke-width="1.300" stroke-linejoin="round"/></svg>
<svg style="left:431px;top:11px" width="9" height="6" viewBox="0 0 9 6"><path class="chev" d="M1 1L4.500 4.500L8 1"/></svg>
<div class="lt" style="left:449px;top:3px;width:20px;height:21px"></div>
<svg style="left:451px;top:5px" width="17" height="17" viewBox="0 0 17 17"><path d="M2.500 4.500H9M2.500 4.500V7.500H9" fill="none" stroke="#222" stroke-width="1.200"/><rect x="3" y="8.500" width="9" height="7" fill="none" stroke="#222" stroke-width="1.200"/><path d="M6 11H9" stroke="#222" stroke-width="1.200"/><circle cx="12.500" cy="4" r="3.500" fill="#111"/><path d="M10.500 4H14.500M12.500 2V6" stroke="#fff" stroke-width="1.100"/></svg>
</div>
<div class="abs" id="pr" style="left:1441px;top:384px;width:476px;height:670px;background:#b3b3b3;border-radius:7px;overflow:hidden">
<div class="abs" style="left:0;top:27px;width:27px;height:643px;background:#666"></div>
<svg style="left:0;top:0" width="28" height="670" viewBox="1441 384 28 670">
<path d="M1468 421.7V448.2H1446A3.500 3.500 0 0 1 1442.500 444.7V425.2A3.500 3.500 0 0 1 1446 421.7Z" fill="#595959"/>
<path d="M1468.500 420.7V446.7H1446A3.500 3.500 0 0 1 1442.500 443.2V424.2A3.500 3.500 0 0 1 1446 420.7Z" fill="#828282"/>
<g transform="translate(1455 433.7)"><g fill="#e4e4e4"><rect x="-6.500" y="-1" width="4" height="7" rx="1.500"/><rect x="-5.300" y="-6.500" width="1.600" height="6"/><path d="M1 -6.500V-2.500L2.500 -1V6.500H5V-1L6.500 -2.500V-6.500H5V-3.500H2.500V-6.500Z"/></g></g>
<path d="M1468 459.6V486.1H1446A3.500 3.500 0 0 1 1442.500 482.6V463.1A3.500 3.500 0 0 1 1446 459.6Z" fill="#595959"/>
<path d="M1468.500 458.6V484.6H1446A3.500 3.500 0 0 1 1442.500 481.1V462.1A3.500 3.500 0 0 1 1446 458.6Z" fill="#828282"/>
<g transform="translate(1455 471.6)"><g fill="#e4e4e4"><path d="M-7 -4H-3L-2 -5.800H3L4 -4H7V6H-7Z"/></g><rect x="-5" y="-1.500" width="7" height="5.500" fill="#828282"/><path d="M-5 0H2M-5 1.800H2" stroke="#e4e4e4" stroke-width=".800"/><rect x="3.500" y="-1.500" width="1.600" height="1.600" fill="#828282"/><rect x="3.500" y="2" width="1.600" height="1.600" fill="#828282"/></g>
<path d="M1468 489.9V516.4H1446A3.500 3.500 0 0 1 1442.500 512.9V493.4A3.500 3.500 0 0 1 1446 489.9Z" fill="#595959"/>
<path d="M1468.500 488.9V514.9H1446A3.500 3.500 0 0 1 1442.500 511.4V492.4A3.500 3.500 0 0 1 1446 488.9Z" fill="#828282"/>
<g transform="translate(1455 501.9)"><g fill="#e4e4e4"><path d="M-7 -6H7V1H4.500V-1.500H-4.500V1H-7Z"/><path d="M-4.500 -0.500H4.500V6.500H-4.500Z" fill="none" stroke="#e4e4e4" stroke-width="1.300"/><path d="M-2.500 4.500L0 1L2.500 4.500Z"/></g></g>
<path d="M1468 519.5V546.0H1446A3.500 3.500 0 0 1 1442.500 542.5V523.0A3.500 3.500 0 0 1 1446 519.5Z" fill="#595959"/>
<path d="M1468.500 518.5V544.5H1446A3.500 3.500 0 0 1 1442.500 541.0V522.0A3.500 3.500 0 0 1 1446 518.5Z" fill="#828282"/>
<g transform="translate(1455 531.5)"><g fill="none" stroke="#e4e4e4" stroke-width="1.200"><rect x="-2.500" y="-6.500" width="9" height="9" fill="#e4e4e4"/><path d="M-4.500 -4.500V5H5M-6.500 -2.500V7H3"/></g><path d="M-1.500 1L1.500 -3L3 -1L4 -2L5.500 1Z" fill="#828282"/></g>
<path d="M1468 549.0V575.5H1446A3.500 3.500 0 0 1 1442.500 572.0V552.5A3.500 3.500 0 0 1 1446 549.0Z" fill="#595959"/>
<path d="M1468.500 548.0V574.0H1446A3.500 3.500 0 0 1 1442.500 570.5V551.5A3.500 3.500 0 0 1 1446 548.0Z" fill="#828282"/>
<g transform="translate(1455 561.0)"><g fill="#e4e4e4"><path d="M-3 -6C-1 -2 0 0 0 2.500A3.300 3.300 0 0 1 -6.600 2.500C-6.600 0 -5 -2 -3 -6Z"/><circle cx="4.200" cy="-3.500" r="2.600"/><circle cx="3.500" cy="3" r="3.300" fill="none" stroke="#e4e4e4" stroke-width="1.200"/><circle cx="3.500" cy="3" r="1.200"/></g></g>
<path d="M1468 579.6V606.1H1446A3.500 3.500 0 0 1 1442.500 602.6V583.1A3.500 3.500 0 0 1 1446 579.6Z" fill="#595959"/>
<path d="M1468.500 578.6V604.6H1446A3.500 3.500 0 0 1 1442.500 601.1V582.1A3.500 3.500 0 0 1 1446 578.6Z" fill="#828282"/>
<g transform="translate(1455 591.6)"><circle r="5.500" fill="#e5646f"/><path d="M-2 -4.500L1 -2.500L-1 0L-3.500 -1ZM1 1L4 0L4.500 3L2 4.500Z" fill="#828282"/><path d="M-7.500 -1A7.500 7.500 0 0 1 3 -7M7.500 1A7.500 7.500 0 0 1 -3 7" fill="none" stroke="#e5646f" stroke-width="1.300"/></g>
<path d="M1468 618.0V644.5H1446A3.500 3.500 0 0 1 1442.500 641.0V621.5A3.500 3.500 0 0 1 1446 618.0Z" fill="#595959"/>
<path d="M1468.500 617.0V643.0H1446A3.500 3.500 0 0 1 1442.500 639.5V620.5A3.500 3.500 0 0 1 1446 617.0Z" fill="#828282"/>
<g transform="translate(1455 630.0)"><g fill="none" stroke="#e4e4e4" stroke-width="1.400"><rect x="-6.500" y="-6" width="13" height="3.500"/><rect x="-5.500" y="-2.500" width="11" height="8.500"/><rect x="-2.500" y="0" width="5" height="2.500" stroke-width="1"/></g></g>
<path d="M1468 656.0V682.5H1446A3.500 3.500 0 0 1 1442.500 679.0V659.5A3.500 3.500 0 0 1 1446 656.0Z" fill="#595959"/>
<path d="M1468.500 655.0V681.0H1446A3.500 3.500 0 0 1 1442.500 677.5V658.5A3.500 3.500 0 0 1 1446 655.0Z" fill="#828282"/>
<g transform="translate(1455 668.0)"><rect x="-4.500" y="-4.500" width="9" height="9" fill="#e8985a"/><path d="M-7 -4V-7H-4M4 -7H7V-4M7 4V7H4M-4 7H-7V4" fill="none" stroke="#e8985a" stroke-width="1.400"/></g>
<path d="M1468 685.8V712.3H1446A3.500 3.500 0 0 1 1442.500 708.8V689.3A3.500 3.500 0 0 1 1446 685.8Z" fill="#595959"/>
<path d="M1468.500 684.8V710.8H1446A3.500 3.500 0 0 1 1442.500 707.3V688.3A3.500 3.500 0 0 1 1446 684.8Z" fill="#828282"/>
<g transform="translate(1455 697.8)"><path d="M-6.200 4.200L0.300 -2.300A4 4 0 0 1 5 -6.500L2.600 -4L4 -2.600L6.500 -5A4 4 0 0 1 2.300 -0.300L-4.200 6.200A1.400 1.400 0 0 1 -6.200 4.200Z" fill="#73a3ea" stroke="#35558a" stroke-width=".700"/></g>
<path d="M1468 715.7V742.2H1446A3.500 3.500 0 0 1 1442.500 738.7V719.2A3.500 3.500 0 0 1 1446 715.7Z" fill="#595959"/>
<path d="M1468.500 714.7V740.7H1446A3.500 3.500 0 0 1 1442.500 737.2V718.2A3.500 3.500 0 0 1 1446 714.7Z" fill="#828282"/>
<g transform="translate(1455 727.7)"><g fill="none" stroke="#73a3ea" stroke-width="1.300"><path d="M-4.500 -4.500L5 -2M-4.500 -4.500L4.500 5.500M-4.500 -4.500V5.500"/><circle cx="-4.500" cy="-4.500" r="2" fill="#73a3ea"/><circle cx="5" cy="-2" r="1.600" fill="#73a3ea"/><circle cx="4.500" cy="5.500" r="1.600" fill="#73a3ea"/><circle cx="-4.500" cy="5.500" r="1.600" fill="#73a3ea"/></g></g>
<path d="M1468 745.9V772.4H1446A3.500 3.500 0 0 1 1442.500 768.9V749.4A3.500 3.500 0 0 1 1446 745.9Z" fill="#595959"/>
<path d="M1468.500 744.9V770.9H1446A3.500 3.500 0 0 1 1442.500 767.4V748.4A3.500 3.500 0 0 1 1446 744.9Z" fill="#828282"/>
<g transform="translate(1455 757.9)"><g fill="none" stroke="#73a3ea" stroke-width="1.400"><path d="M5 4A6.500 6.500 0 1 1 3 -5.500"/><circle cx="0" cy="0" r="2.800"/><circle cx="4.500" cy="-4" r="2" fill="#73a3ea"/></g></g>
<path d="M1468 775.6V802.1H1446A3.500 3.500 0 0 1 1442.500 798.6V779.1A3.500 3.500 0 0 1 1446 775.6Z" fill="#595959"/>
<path d="M1468.500 774.6V800.6H1446A3.500 3.500 0 0 1 1442.500 797.1V778.1A3.500 3.500 0 0 1 1446 774.6Z" fill="#828282"/>
<g transform="translate(1455 787.6)"><g fill="none" stroke="#73a3ea" stroke-width="1.400"><path d="M-6 2C-6 -2 -1 -6 3 -6.500C6 -6.500 7 -4 5.500 -1.500C3 2.500 -1 6 -3.500 6C-5.500 6 -6 4 -6 2Z"/><circle cx="-2" cy="2" r="2.300"/><circle cx="3.300" cy="-3.300" r="1.200" fill="#73a3ea"/></g></g>
<path d="M1468 805.2V831.7H1446A3.500 3.500 0 0 1 1442.500 828.2V808.7A3.500 3.500 0 0 1 1446 805.2Z" fill="#595959"/>
<path d="M1468.500 804.2V830.2H1446A3.500 3.500 0 0 1 1442.500 826.7V807.7A3.500 3.500 0 0 1 1446 804.2Z" fill="#828282"/>
<g transform="translate(1455 817.2)"><g fill="#828282" stroke="#2fc39a"><path d="M-5.500 -5H5.500L0 5.500Z" fill="none" stroke-width="1.500"/><rect x="-7.200" y="-6.700" width="3.400" height="3.400" stroke-width="1.100"/><rect x="3.800" y="-6.700" width="3.400" height="3.400" stroke-width="1.100"/><rect x="-1.700" y="4" width="3.400" height="3.400" stroke-width="1.100"/></g></g>
<path d="M1468 835.4V861.9H1446A3.500 3.500 0 0 1 1442.500 858.4V838.9A3.500 3.500 0 0 1 1446 835.4Z" fill="#595959"/>
<path d="M1468.500 834.4V860.4H1446A3.500 3.500 0 0 1 1442.500 856.9V837.9A3.500 3.500 0 0 1 1446 834.4Z" fill="#b3b3b3"/>
<g transform="translate(1455 847.4)"><circle r="6.300" fill="#e5646f" stroke="#7a2a33" stroke-width=".800"/><path d="M0 0V-6.300A6.300 6.300 0 0 1 6.300 0ZM0 0V6.300A6.300 6.300 0 0 1 -6.300 0Z" fill="#efb3b8" fill-opacity=".55"/></g>
<path d="M1468 874.0V900.5H1446A3.500 3.500 0 0 1 1442.500 897.0V877.5A3.500 3.500 0 0 1 1446 874.0Z" fill="#595959"/>
<path d="M1468.500 873.0V899.0H1446A3.500 3.500 0 0 1 1442.500 895.5V876.5A3.500 3.500 0 0 1 1446 873.0Z" fill="#828282"/>
<g transform="translate(1455 886.0)"><rect x="-6.500" y="-6.500" width="13" height="13" rx="1" fill="#e5646f" stroke="#7a2a33" stroke-width=".800"/><g fill="#5a2026"><rect x="-5.500" y="-5.500" width="2.750" height="2.750"/><rect x="0" y="-5.500" width="2.750" height="2.750"/><rect x="-2.750" y="-2.750" width="2.750" height="2.750"/><rect x="2.750" y="-2.750" width="2.750" height="2.750"/><rect x="-5.500" y="0" width="2.750" height="2.750"/><rect x="0" y="0" width="2.750" height="2.750"/><rect x="-2.750" y="2.750" width="2.750" height="2.750"/><rect x="2.750" y="2.750" width="2.750" height="2.750"/></g></g>
</svg>
<div class="abs" style="left:35px;top:253px;width:433px;height:420px;background:#a8a8a8;border-radius:4px"></div>
<div class="dk" style="left:7px;top:2px;width:35px;height:22px"></div>
<svg style="left:11px;top:6px" width="17" height="15" viewBox="0 0 17 15"><rect x="1" y="1" width="14" height="5.600" rx="2.800" fill="#e6e6e6"/><path d="M7.500 2H12.200A1.800 1.800 0 0 1 12.200 5.600H7.500Z" fill="#3d3d3d"/><rect x="1" y="8.400" width="14" height="5.600" rx="2.800" fill="#e6e6e6"/><path d="M10.500 9.400H12.200A1.800 1.800 0 0 1 12.200 13H10.500Z" fill="#3d3d3d"/></svg>
<svg style="left:31px;top:11px" width="9" height="6" viewBox="0 0 9 6"><path class="chev" d="M1 1L4.500 4.500L8 1"/></svg>
<div class="abs" style="left:185px;top:3px;width:113px;height:21px;background:#232323;border:1.500px solid #4a4a4a;border-radius:4px"></div>
<svg style="left:189px;top:6px" width="16" height="16" viewBox="0 0 16 16"><circle cx="9.500" cy="5.800" r="4.300" fill="none" stroke="#e6e6e6" stroke-width="1.300"/><path d="M6.500 9L1.500 14.500" stroke="#e6e6e6" stroke-width="1.500" stroke-linecap="round"/></svg>
<div class="dk" style="left:449px;top:3px;width:21px;height:21px"></div>
<svg style="left:455px;top:11px" width="9" height="6" viewBox="0 0 9 6"><path class="chev" d="M1 1L4.500 4.500L8 1"/></svg>
<svg style="left:38px;top:38px" width="16" height="16" viewBox="0 0 16 16"><path d="M1 4.500V1H4.500M11.500 1H15V4.500M15 11.500V15H11.500M4.500 15H1V11.500" stroke="#222" stroke-width="1.200" fill="none"/><rect x="4" y="4" width="8" height="8" fill="#111"/></svg>
<div class="tx" style="left:62px;top:40px;font-size:12px">円柱</div>
<svg style="left:103px;top:41px" width="8" height="10" viewBox="0 0 8 10"><path d="M1.500 1L6 5L1.500 9" fill="none" stroke="#222" stroke-width="1.200"/></svg>
<svg style="left:121px;top:38px" width="16" height="16" viewBox="0 0 16 16"><circle cx="8" cy="8" r="6.500" fill="#eee" stroke="#111" stroke-width="1.200"/><path d="M8 1.500A6.500 6.500 0 0 1 14.500 8H8ZM8 14.500A6.500 6.500 0 0 1 1.500 8H8Z" fill="#111"/></svg>
<div class="tx" style="left:146px;top:40px;font-size:12px">赤</div>
<svg style="left:451px;top:38px" width="16" height="16" viewBox="0 0 16 16"><path d="M9 1.500L14.500 7L12.800 7.300L10.500 9.600L10 12.500L3.500 6L6.400 5.500L8.700 3.200Z" fill="none" stroke="#555" stroke-width="1.100" stroke-linejoin="round"/><path d="M6.800 9.200L2 14" stroke="#555" stroke-width="1.100"/></svg>
<div class="abs" style="left:36px;top:74px;width:404px;height:85px;background:#c3c3c3;border:1.500px solid #9a9a9a;border-radius:4px"></div>
<div class="abs" style="left:42px;top:80px;width:391px;height:18px;background:#828282;border-radius:2px"></div>
<svg style="left:45px;top:82px" width="14" height="14" viewBox="0 0 14 14"><defs><radialGradient id="rs" cx=".35" cy=".3" r=".75"><stop offset="0" stop-color="#ff9a9a"/><stop offset=".25" stop-color="#f01818"/><stop offset="1" stop-color="#8a0000"/></radialGradient></defs><circle cx="7" cy="7" r="6.300" fill="url(#rs)"/></svg>
<div class="tx" style="left:67px;top:83px;color:#fff;font-size:12px">赤</div>
<svg style="left:48px;top:145px" width="6" height="6"><path d="M.5 .5V5.500L5 3Z" fill="#444"/></svg>
<div class="tx" style="left:243px;top:142px;font-size:8px;letter-spacing:0;color:#444">::::</div>
<div class="lt" style="left:450px;top:75px;width:18px;height:40px"></div>
<div class="abs" style="left:450px;top:93px;width:18px;height:1px;background:#b0b0b0"></div>
<svg style="left:454px;top:79px" width="10" height="10"><path d="M5 .5V9.500M.5 5H9.500" stroke="#222" stroke-width="1.200"/></svg>
<svg style="left:454px;top:99px" width="10" height="10"><path d="M.5 5H9.500" stroke="#222" stroke-width="1.200"/></svg>
<div class="dk" style="left:449px;top:124px;width:21px;height:21px"></div>
<svg style="left:455px;top:132px" width="9" height="6" viewBox="0 0 9 6"><path class="chev" d="M1 1L4.500 4.500L8 1"/></svg>
<div class="dk" style="left:35px;top:166px;width:34px;height:20px;border-radius:4px 0 0 4px"></div>
<svg style="left:39px;top:168px" width="16" height="16" viewBox="0 0 16 16"><circle cx="8" cy="8" r="6.300" fill="#e6e6e6"/><path d="M8 1.700A6.300 6.300 0 0 1 14.300 8H8ZM8 14.300A6.300 6.300 0 0 1 1.700 8H8Z" fill="#3d3d3d"/><circle cx="8" cy="8" r="6.300" fill="none" stroke="#e6e6e6" stroke-width="1"/></svg>
<svg style="left:58px;top:174px" width="9" height="6" viewBox="0 0 9 6"><path class="chev" d="M1 1L4.500 4.500L8 1"/></svg>
<div class="abs" style="left:69px;top:166px;width:243px;height:20px;background:#232323;border:1px solid #3d3d3d"></div>
<div class="tx" style="left:78px;top:170px;color:#e6e6e6;font-size:12px">赤</div>
<div class="lt" style="left:312px;top:166px;width:48px;height:20px;border-radius:0;text-align:center;line-height:20px;font-size:12px">7</div>
<div class="lt" style="left:361px;top:166px;width:21px;height:20px;border-radius:0"></div>
<svg style="left:364px;top:168px" width="15" height="16" viewBox="0 0 15 16"><path d="M7.500 1.500C5.500 3 3.500 3.300 1.800 3.300C1.800 8 3 12 7.500 14.500C12 12 13.200 8 13.200 3.300C11.500 3.300 9.500 3 7.500 1.500Z" fill="none" stroke="#444" stroke-width="1.100"/></svg>
<div class="lt" style="left:383px;top:166px;width:21px;height:20px;border-radius:0"></div>
<svg style="left:386px;top:168px" width="16" height="16" viewBox="0 0 16 16"><path d="M5.500 4V1.500H11L14 4.500V11.500H10.500" fill="none" stroke="#222" stroke-width="1.200"/><path d="M11 1.500V4.500H14" fill="none" stroke="#222" stroke-width="1"/><rect x="1.500" y="4.500" width="8.500" height="10" fill="none" stroke="#222" stroke-width="1.200"/></svg>
<div class="lt" style="left:405px;top:166px;width:21px;height:20px;border-radius:0 4px 4px 0"></div>
<svg style="left:410px;top:171px" width="11" height="11"><path d="M1.500 1.500L9.500 9.500M9.500 1.500L1.500 9.500" stroke="#222" stroke-width="1.300"/></svg>
<div class="dk" style="left:435px;top:166px;width:35px;height:21px"></div>
<svg style="left:439px;top:168px" width="16" height="16" viewBox="0 0 16 16"><g fill="#3d3d3d" stroke="#e6e6e6"><path d="M2.500 2.500H13.500L8 13.500Z" fill="none" stroke-width="1.300"/><rect x="1" y="1" width="3.200" height="3.200" stroke-width="1"/><rect x="11.800" y="1" width="3.200" height="3.200" stroke-width="1"/><rect x="6.400" y="11.800" width="3.200" height="3.200" stroke-width="1"/></g></svg>
<svg style="left:459px;top:174px" width="9" height="6" viewBox="0 0 9 6"><path class="chev" d="M1 1L4.500 4.500L8 1"/></svg>
<svg style="left:45px;top:206px" width="8" height="10" viewBox="0 0 8 10"><path d="M1.500 1L6 5L1.500 9" fill="none" stroke="#444" stroke-width="1.300"/></svg>
<div class="tx" style="left:59px;top:205px;font-size:12px">プレビュー</div>
<svg style="left:43px;top:237px" width="10" height="8" viewBox="0 0 10 8"><path d="M1 1.500L5 6L9 1.500" fill="none" stroke="#444" stroke-width="1.300"/></svg>
<div class="tx" style="left:59px;top:234px;font-size:12px">サーフェス</div>
<div class="tx" style="left:447px;top:206px;font-size:8px;color:#555;line-height:4px">::::<br>::::</div>
<div class="tx" style="left:447px;top:235px;font-size:8px;color:#555;line-height:4px">::::<br>::::</div>
<div class="abs" style="left:44px;top:263px;width:415px;height:19px;background:#688dcf;border-radius:3px;box-shadow:0 1px 1px rgba(0,0,0,.3);color:#fff;text-align:center;line-height:19px;font-size:11px;padding-left:18px">ノードを使用</div>
<svg style="left:48px;top:265px" width="16" height="15" viewBox="0 0 16 15"><rect x="1" y="1" width="9" height="5.500" rx="1" fill="#fff"/><rect x="1" y="8.500" width="7" height="5" rx="1" fill="#fff"/><path d="M10 3.500H13.500V11H8" fill="none" stroke="#fff" stroke-width="1"/></svg>
<div class="tx" style="left:0;width:195px;text-align:right;top:304px">サーフェス</div>
<div class="dk" style="left:205px;top:300px;width:233px;height:21px"></div>
<div class="abs" style="left:211px;top:305px;width:10px;height:10px;border-radius:5px;background:#5fd45f;border:1.200px solid #111"></div>
<div class="tx" style="left:230px;top:304px;color:#e6e6e6">プリンシプルBSDF</div>
<div class="dk" style="left:205px;top:338px;width:233px;height:21px"></div>
<div class="tx" style="left:214px;top:342px;color:#e6e6e6;font-size:12px">GGX</div>
<svg style="left:425px;top:346px" width="9" height="6" viewBox="0 0 9 6"><path class="chev" d="M1 1L4.500 4.500L8 1"/></svg>
<div class="abs" style="left:447px;top:346px;width:4px;height:4px;border-radius:2px;background:#2a2a2a"></div>
<div class="dk" style="left:205px;top:365px;width:233px;height:21px"></div>
<div class="tx" style="left:214px;top:369px;color:#e6e6e6;font-size:12px">ランダムウォーク</div>
<svg style="left:425px;top:373px" width="9" height="6" viewBox="0 0 9 6"><path class="chev" d="M1 1L4.500 4.500L8 1"/></svg>
<div class="abs" style="left:447px;top:373px;width:4px;height:4px;border-radius:2px;background:#2a2a2a"></div>
<div class="tx" style="left:0;width:195px;text-align:right;top:396px">ベースカラー</div>
<div class="dk" style="left:205px;top:392px;width:21px;height:21px;border-radius:4px 0 0 4px"></div>
<div class="abs" style="left:211px;top:398px;width:9px;height:9px;border-radius:5px;background:#c7c729;border:1.200px solid #111"></div>
<div class="abs" style="left:226px;top:392px;width:211px;height:21px;background:#f00;border-radius:0 4px 4px 0;box-shadow:0 1px 1px rgba(0,0,0,.3)"></div>
<div class="abs" style="left:447px;top:400px;width:4px;height:4px;border-radius:2px;background:#2a2a2a"></div>
<div class="tx" style="left:0;width:195px;text-align:right;top:423px">サブサーフェス</div>
<div class="dk" style="left:205px;top:419px;width:21px;height:21px;border-radius:4px 0 0 4px"></div>
<div class="abs" style="left:211px;top:425px;width:9px;height:9px;border-radius:5px;background:#a1a1a1;border:1.200px solid #111"></div>
<div class="abs" style="left:226px;top:419px;width:211px;height:21px;background:#9b9b9b;border-radius:0 4px 4px 0;box-shadow:0 1px 1px rgba(0,0,0,.3);overflow:hidden;text-align:center;line-height:21px;font-size:12px"><div class="abs" style="left:0;top:0;width:0px;height:21px;background:#e4e4e4"></div><span style="position:relative">0.000</span></div>
<div class="abs" style="left:447px;top:427px;width:4px;height:4px;border-radius:2px;background:#2a2a2a"></div>
<div class="tx" style="left:0;width:195px;text-align:right;top:450px">サブサーフェス範囲</div>
<div class="dk" style="left:205px;top:446px;width:22px;height:21px;border-radius:4px 0 0 4px"></div>
<div class="abs" style="left:211px;top:452px;width:9px;height:9px;border-radius:5px;background:#6363c7;border:1.200px solid #111"></div>
<div class="abs" style="left:234px;top:445px;width:203px;height:65px;background:#d8d8d8;border-radius:4px;box-shadow:0 1px 1px rgba(0,0,0,.3)"></div>
<div class="tx" style="left:234px;width:203px;text-align:center;top:450px;font-size:12px">1.000</div>
<div class="abs" style="left:447px;top:454px;width:4px;height:4px;border-radius:2px;background:#2a2a2a"></div>
<div class="tx" style="left:234px;width:203px;text-align:center;top:471px;font-size:12px">0.200</div>
<div class="abs" style="left:447px;top:475px;width:4px;height:4px;border-radius:2px;background:#2a2a2a"></div>
<div class="tx" style="left:234px;width:203px;text-align:center;top:493px;font-size:12px">0.100</div>
<div class="abs" style="left:447px;top:497px;width:4px;height:4px;border-radius:2px;background:#2a2a2a"></div>
<div class="abs" style="left:234px;top:466px;width:203px;height:1px;background:#b5b5b5"></div>
<div class="abs" style="left:234px;top:488px;width:203px;height:1px;background:#b5b5b5"></div>
<div class="tx" style="left:0;width:195px;text-align:right;top:520px">サブサーフェスカラー</div>
<div class="dk" style="left:205px;top:516px;width:21px;height:21px;border-radius:4px 0 0 4px"></div>
<div class="abs" style="left:211px;top:522px;width:9px;height:9px;border-radius:5px;background:#c7c729;border:1.200px solid #111"></div>
<div class="abs" style="left:226px;top:516px;width:211px;height:21px;background:#e7e7e7;border-radius:0 4px 4px 0;box-shadow:0 1px 1px rgba(0,0,0,.3)"></div>
<div class="abs" style="left:447px;top:524px;width:4px;height:4px;border-radius:2px;background:#2a2a2a"></div>
<div class="tx" style="left:0;width:195px;text-align:right;top:547px">サブサーフェスIOR</div>
<div class="dk" style="left:205px;top:543px;width:21px;height:21px;border-radius:4px 0 0 4px"></div>
<div class="abs" style="left:211px;top:549px;width:9px;height:9px;border-radius:5px;background:#a1a1a1;border:1.200px solid #111"></div>
<div class="abs" style="left:226px;top:543px;width:211px;height:21px;background:#9b9b9b;border-radius:0 4px 4px 0;box-shadow:0 1px 1px rgba(0,0,0,.3);overflow:hidden;text-align:center;line-height:21px;font-size:12px"><div class="abs" style="left:0;top:0;width:24px;height:21px;background:#e4e4e4"></div><span style="position:relative">1.400</span></div>
<div class="abs" style="left:447px;top:551px;width:4px;height:4px;border-radius:2px;background:#2a2a2a"></div>
<div class="tx" style="left:0;width:195px;text-align:right;top:574px">サブサーフェス異方性</div>
<div class="dk" style="left:205px;top:570px;width:21px;height:21px;border-radius:4px 0 0 4px"></div>
<div class="abs" style="left:211px;top:576px;width:9px;height:9px;border-radius:5px;background:#a1a1a1;border:1.200px solid #111"></div>
<div class="abs" style="left:226px;top:570px;width:211px;height:21px;background:#9b9b9b;border-radius:0 4px 4px 0;box-shadow:0 1px 1px rgba(0,0,0,.3);overflow:hidden;text-align:center;line-height:21px;font-size:12px"><div class="abs" style="left:0;top:0;width:0px;height:21px;background:#e4e4e4"></div><span style="position:relative">0.000</span></div>
<div class="abs" style="left:447px;top:578px;width:4px;height:4px;border-radius:2px;background:#2a2a2a"></div>
<div class="tx" style="left:0;width:195px;text-align:right;top:601px">メタリック</div>
<div class="dk" style="left:205px;top:597px;width:21px;height:21px;border-radius:4px 0 0 4px"></div>
<div class="abs" style="left:211px;top:603px;width:9px;height:9px;border-radius:5px;background:#a1a1a1;border:1.200px solid #111"></div>
<div class="abs" style="left:226px;top:597px;width:211px;height:21px;background:#9b9b9b;border-radius:0 4px 4px 0;box-shadow:0 1px 1px rgba(0,0,0,.3);overflow:hidden;text-align:center;line-height:21px;font-size:12px"><div class="abs" style="left:0;top:0;width:0px;height:21px;background:#e4e4e4"></div><span style="position:relative">0.000</span></div>
<div class="abs" style="left:447px;top:605px;width:4px;height:4px;border-radius:2px;background:#2a2a2a"></div>
<div class="tx" style="left:0;width:195px;text-align:right;top:628px">スペキュラー</div>
<div class="dk" style="left:205px;top:624px;width:21px;height:21px;border-radius:4px 0 0 4px"></div>
<div class="abs" style="left:211px;top:630px;width:9px;height:9px;border-radius:5px;background:#a1a1a1;border:1.200px solid #111"></div>
<div class="abs" style="left:226px;top:624px;width:211px;height:21px;background:#9b9b9b;border-radius:0 4px 4px 0;box-shadow:0 1px 1px rgba(0,0,0,.3);overflow:hidden;text-align:center;line-height:21px;font-size:12px"><div class="abs" style="left:0;top:0;width:105px;height:21px;background:#e4e4e4"></div><span style="position:relative">0.500</span></div>
<div class="abs" style="left:447px;top:632px;width:4px;height:4px;border-radius:2px;background:#2a2a2a"></div>
<div class="tx" style="left:0;width:195px;text-align:right;top:655px">スペキュラーチント</div>
<div class="dk" style="left:205px;top:651px;width:21px;height:21px;border-radius:4px 0 0 4px"></div>
<div class="abs" style="left:211px;top:657px;width:9px;height:9px;border-radius:5px;background:#a1a1a1;border:1.200px solid #111"></div>
<div class="abs" style="left:226px;top:651px;width:211px;height:21px;background:#9b9b9b;border-radius:0 4px 4px 0;box-shadow:0 1px 1px rgba(0,0,0,.3);overflow:hidden;text-align:center;line-height:21px;font-size:12px"><div class="abs" style="left:0;top:0;width:0px;height:21px;background:#e4e4e4"></div><span style="position:relative">0.000</span></div>
<div class="abs" style="left:447px;top:659px;width:4px;height:4px;border-radius:2px;background:#2a2a2a"></div>
</div>
<svg style="left:0;top:0" width="1920" height="1080" viewBox="0 0 1920 1080">
<path d="M0 0H9A9 9 0 0 0 0 9Z" fill="#e9e9e9"/>
<path d="M1920 0H1911A9 9 0 0 1 1920 9Z" fill="#b5714a"/>
<path d="M0 1080H9A9 9 0 0 1 0 1071Z" fill="#dadada"/>
<path d="M1920 1080H1911A9 9 0 0 0 1920 1071Z" fill="#dadada"/>
<path d="M0.500 1070A8.500 8.500 0 0 0 9 1079.500M1919.500 1070A8.500 8.500 0 0 1 1911 1079.500" fill="none" stroke="#0a6fd0" stroke-width="1.200"/>
</svg>
</div><!--root-->
</body></html>
